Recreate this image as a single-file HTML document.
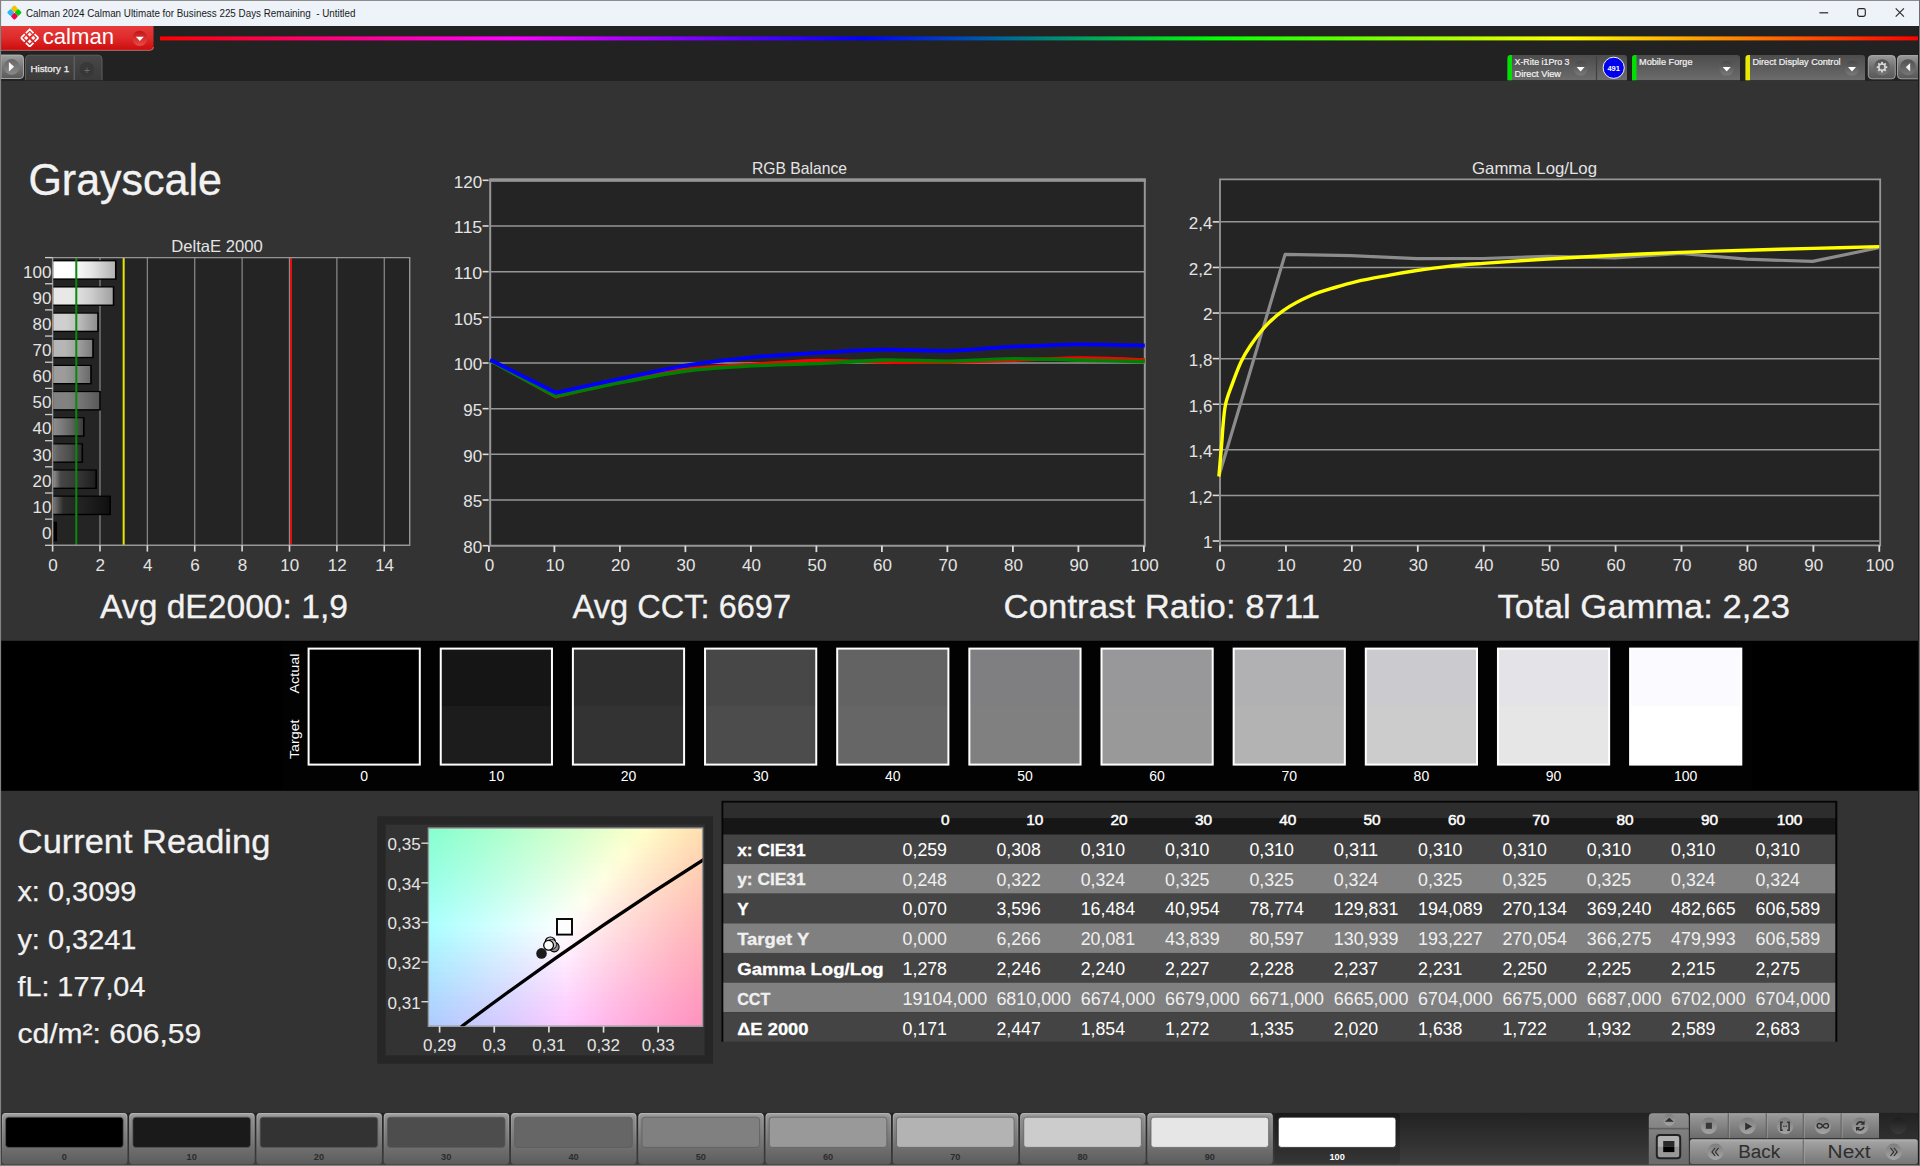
<!DOCTYPE html>
<html lang="en"><head><meta charset="utf-8"><title>Calman 2024 - Grayscale</title>
<style>html,body{margin:0;padding:0;background:#333;overflow:hidden}svg{display:block}text{font-family:"Liberation Sans",sans-serif;white-space:pre}</style></head>
<body>
<svg width="1920" height="1166" viewBox="0 0 1920 1166">
<defs>
<linearGradient id="gRed" x1="0" y1="0" x2="0" y2="1"><stop offset="0" stop-color="#e63c3c"/><stop offset="0.5" stop-color="#de2a2a"/><stop offset="1" stop-color="#cc0c0c"/></linearGradient>
<linearGradient id="gRedC" x1="0" y1="0" x2="0" y2="1"><stop offset="0" stop-color="#c21414"/><stop offset="1" stop-color="#e84a4a"/></linearGradient>
<linearGradient id="gRain" x1="0" y1="0" x2="1" y2="0"><stop offset="0" stop-color="#ff0000"/><stop offset="0.2" stop-color="#ff00ff"/><stop offset="0.4" stop-color="#0000ff"/><stop offset="0.6" stop-color="#00ff00"/><stop offset="0.8" stop-color="#ffff00"/><stop offset="1" stop-color="#ff0000"/></linearGradient>
<linearGradient id="gBtnL" x1="0" y1="0" x2="0" y2="1"><stop offset="0" stop-color="#a0a0a0"/><stop offset="0.5" stop-color="#777"/><stop offset="1" stop-color="#5a5a5a"/></linearGradient>
<linearGradient id="gPlayC" x1="0" y1="0" x2="0" y2="1"><stop offset="0" stop-color="#626262"/><stop offset="1" stop-color="#8e8e8e"/></linearGradient>
<linearGradient id="gTab" x1="0" y1="0" x2="0" y2="1"><stop offset="0" stop-color="#484848"/><stop offset="1" stop-color="#3a3a3a"/></linearGradient>
<linearGradient id="gDev" x1="0" y1="0" x2="0" y2="1"><stop offset="0" stop-color="#4c4c4c"/><stop offset="1" stop-color="#6c6c6c"/></linearGradient>
<linearGradient id="gDrop" x1="0" y1="0" x2="0" y2="1"><stop offset="0" stop-color="#474747"/><stop offset="1" stop-color="#7c7c7c"/></linearGradient>
<linearGradient id="gBtn" x1="0" y1="0" x2="0" y2="1"><stop offset="0" stop-color="#9a9a9a"/><stop offset="0.5" stop-color="#707070"/><stop offset="1" stop-color="#585858"/></linearGradient>
<linearGradient id="gB0" x1="0" y1="0" x2="1" y2="0"><stop offset="0" stop-color="#5f5f5f"/><stop offset="0.18" stop-color="#000000"/><stop offset="0.6" stop-color="#000000"/><stop offset="1" stop-color="#000000"/></linearGradient>
<linearGradient id="gB1" x1="0" y1="0" x2="1" y2="0"><stop offset="0" stop-color="#787878"/><stop offset="0.18" stop-color="#2c2c2c"/><stop offset="0.6" stop-color="#1f1f1f"/><stop offset="1" stop-color="#0f0f0f"/></linearGradient>
<linearGradient id="gB2" x1="0" y1="0" x2="1" y2="0"><stop offset="0" stop-color="#929292"/><stop offset="0.18" stop-color="#464646"/><stop offset="0.6" stop-color="#363636"/><stop offset="1" stop-color="#1e1e1e"/></linearGradient>
<linearGradient id="gB3" x1="0" y1="0" x2="1" y2="0"><stop offset="0" stop-color="#747474"/><stop offset="0.18" stop-color="#606060"/><stop offset="0.6" stop-color="#4d4d4d"/><stop offset="1" stop-color="#2c2c2c"/></linearGradient>
<linearGradient id="gB4" x1="0" y1="0" x2="1" y2="0"><stop offset="0" stop-color="#8e8e8e"/><stop offset="0.3" stop-color="#7a7a7a"/><stop offset="0.6" stop-color="#646464"/><stop offset="1" stop-color="#3b3b3b"/></linearGradient>
<linearGradient id="gB5" x1="0" y1="0" x2="1" y2="0"><stop offset="0" stop-color="#828282"/><stop offset="0.3" stop-color="#828282"/><stop offset="0.62" stop-color="#737373"/><stop offset="1" stop-color="#595959"/></linearGradient>
<linearGradient id="gB6" x1="0" y1="0" x2="1" y2="0"><stop offset="0" stop-color="#9c9c9c"/><stop offset="0.3" stop-color="#9c9c9c"/><stop offset="0.62" stop-color="#8a8a8a"/><stop offset="1" stop-color="#6b6b6b"/></linearGradient>
<linearGradient id="gB7" x1="0" y1="0" x2="1" y2="0"><stop offset="0" stop-color="#b6b6b6"/><stop offset="0.3" stop-color="#b6b6b6"/><stop offset="0.62" stop-color="#a1a1a1"/><stop offset="1" stop-color="#7d7d7d"/></linearGradient>
<linearGradient id="gB8" x1="0" y1="0" x2="1" y2="0"><stop offset="0" stop-color="#cfcfcf"/><stop offset="0.3" stop-color="#cfcfcf"/><stop offset="0.62" stop-color="#b8b8b8"/><stop offset="1" stop-color="#8f8f8f"/></linearGradient>
<linearGradient id="gB9" x1="0" y1="0" x2="1" y2="0"><stop offset="0" stop-color="#e8e8e8"/><stop offset="0.3" stop-color="#e8e8e8"/><stop offset="0.62" stop-color="#cfcfcf"/><stop offset="1" stop-color="#a1a1a1"/></linearGradient>
<linearGradient id="gB10" x1="0" y1="0" x2="1" y2="0"><stop offset="0" stop-color="#ffffff"/><stop offset="0.3" stop-color="#ffffff"/><stop offset="0.62" stop-color="#e5e5e5"/><stop offset="1" stop-color="#b2b2b2"/></linearGradient>
<linearGradient id="c0" x1="0" y1="0" x2="1" y2="0"><stop offset="0.0" stop-color="#87ffcf"/><stop offset="0.0714" stop-color="#91ffcf"/><stop offset="0.1429" stop-color="#9bffce"/><stop offset="0.2143" stop-color="#a5ffce"/><stop offset="0.2857" stop-color="#b0ffcd"/><stop offset="0.3571" stop-color="#bbffcd"/><stop offset="0.4286" stop-color="#c5ffcc"/><stop offset="0.5" stop-color="#d1ffcc"/><stop offset="0.5714" stop-color="#dcffcb"/><stop offset="0.6429" stop-color="#e7ffcb"/><stop offset="0.7143" stop-color="#f3ffca"/><stop offset="0.7857" stop-color="#ffffca"/><stop offset="0.8571" stop-color="#fff3c0"/><stop offset="0.9286" stop-color="#ffe8b7"/><stop offset="1.0" stop-color="#ffdeaf"/></linearGradient>
<linearGradient id="c1" x1="0" y1="0" x2="1" y2="0"><stop offset="0.0" stop-color="#89ffd1"/><stop offset="0.0714" stop-color="#93ffd1"/><stop offset="0.1429" stop-color="#9dffd0"/><stop offset="0.2143" stop-color="#a7ffd0"/><stop offset="0.2857" stop-color="#b2ffcf"/><stop offset="0.3571" stop-color="#bdffcf"/><stop offset="0.4286" stop-color="#c8ffcf"/><stop offset="0.5" stop-color="#d3ffce"/><stop offset="0.5714" stop-color="#deffce"/><stop offset="0.6429" stop-color="#eaffcd"/><stop offset="0.7143" stop-color="#f6ffcd"/><stop offset="0.7857" stop-color="#fffcca"/><stop offset="0.8571" stop-color="#fff1c0"/><stop offset="0.9286" stop-color="#ffe6b7"/><stop offset="1.0" stop-color="#ffdcaf"/></linearGradient>
<linearGradient id="c2" x1="0" y1="0" x2="1" y2="0"><stop offset="0.0" stop-color="#8affd3"/><stop offset="0.0714" stop-color="#95ffd3"/><stop offset="0.1429" stop-color="#9fffd3"/><stop offset="0.2143" stop-color="#a9ffd2"/><stop offset="0.2857" stop-color="#b4ffd2"/><stop offset="0.3571" stop-color="#bfffd1"/><stop offset="0.4286" stop-color="#caffd1"/><stop offset="0.5" stop-color="#d5ffd1"/><stop offset="0.5714" stop-color="#e0ffd0"/><stop offset="0.6429" stop-color="#ecffd0"/><stop offset="0.7143" stop-color="#f8ffcf"/><stop offset="0.7857" stop-color="#fffacb"/><stop offset="0.8571" stop-color="#ffeec1"/><stop offset="0.9286" stop-color="#ffe4b8"/><stop offset="1.0" stop-color="#ffdaaf"/></linearGradient>
<linearGradient id="c3" x1="0" y1="0" x2="1" y2="0"><stop offset="0.0" stop-color="#8cffd6"/><stop offset="0.0714" stop-color="#96ffd5"/><stop offset="0.1429" stop-color="#a1ffd5"/><stop offset="0.2143" stop-color="#abffd5"/><stop offset="0.2857" stop-color="#b6ffd4"/><stop offset="0.3571" stop-color="#c1ffd4"/><stop offset="0.4286" stop-color="#ccffd3"/><stop offset="0.5" stop-color="#d7ffd3"/><stop offset="0.5714" stop-color="#e3ffd3"/><stop offset="0.6429" stop-color="#efffd2"/><stop offset="0.7143" stop-color="#fbffd2"/><stop offset="0.7857" stop-color="#fff7cb"/><stop offset="0.8571" stop-color="#ffecc1"/><stop offset="0.9286" stop-color="#ffe2b8"/><stop offset="1.0" stop-color="#ffd8b0"/></linearGradient>
<linearGradient id="c4" x1="0" y1="0" x2="1" y2="0"><stop offset="0.0" stop-color="#8effd8"/><stop offset="0.0714" stop-color="#98ffd8"/><stop offset="0.1429" stop-color="#a2ffd7"/><stop offset="0.2143" stop-color="#adffd7"/><stop offset="0.2857" stop-color="#b8ffd7"/><stop offset="0.3571" stop-color="#c3ffd6"/><stop offset="0.4286" stop-color="#ceffd6"/><stop offset="0.5" stop-color="#d9ffd5"/><stop offset="0.5714" stop-color="#e5ffd5"/><stop offset="0.6429" stop-color="#f1ffd5"/><stop offset="0.7143" stop-color="#fdffd4"/><stop offset="0.7857" stop-color="#fff5cb"/><stop offset="0.8571" stop-color="#ffeac2"/><stop offset="0.9286" stop-color="#ffdfb9"/><stop offset="1.0" stop-color="#ffd6b0"/></linearGradient>
<linearGradient id="c5" x1="0" y1="0" x2="1" y2="0"><stop offset="0.0" stop-color="#90ffda"/><stop offset="0.0714" stop-color="#9affda"/><stop offset="0.1429" stop-color="#a4ffda"/><stop offset="0.2143" stop-color="#afffd9"/><stop offset="0.2857" stop-color="#baffd9"/><stop offset="0.3571" stop-color="#c5ffd9"/><stop offset="0.4286" stop-color="#d0ffd8"/><stop offset="0.5" stop-color="#dcffd8"/><stop offset="0.5714" stop-color="#e7ffd7"/><stop offset="0.6429" stop-color="#f4ffd7"/><stop offset="0.7143" stop-color="#fffed6"/><stop offset="0.7857" stop-color="#fff2cc"/><stop offset="0.8571" stop-color="#ffe7c2"/><stop offset="0.9286" stop-color="#ffddb9"/><stop offset="1.0" stop-color="#ffd4b1"/></linearGradient>
<linearGradient id="c6" x1="0" y1="0" x2="1" y2="0"><stop offset="0.0" stop-color="#91ffdd"/><stop offset="0.0714" stop-color="#9cffdc"/><stop offset="0.1429" stop-color="#a6ffdc"/><stop offset="0.2143" stop-color="#b1ffdc"/><stop offset="0.2857" stop-color="#bcffdb"/><stop offset="0.3571" stop-color="#c7ffdb"/><stop offset="0.4286" stop-color="#d2ffdb"/><stop offset="0.5" stop-color="#deffda"/><stop offset="0.5714" stop-color="#eaffda"/><stop offset="0.6429" stop-color="#f6ffda"/><stop offset="0.7143" stop-color="#fffcd6"/><stop offset="0.7857" stop-color="#fff0cc"/><stop offset="0.8571" stop-color="#ffe5c2"/><stop offset="0.9286" stop-color="#ffdbba"/><stop offset="1.0" stop-color="#ffd1b1"/></linearGradient>
<linearGradient id="c7" x1="0" y1="0" x2="1" y2="0"><stop offset="0.0" stop-color="#93ffdf"/><stop offset="0.0714" stop-color="#9dffdf"/><stop offset="0.1429" stop-color="#a8ffde"/><stop offset="0.2143" stop-color="#b3ffde"/><stop offset="0.2857" stop-color="#beffde"/><stop offset="0.3571" stop-color="#c9ffdd"/><stop offset="0.4286" stop-color="#d5ffdd"/><stop offset="0.5" stop-color="#e0ffdd"/><stop offset="0.5714" stop-color="#ecffdd"/><stop offset="0.6429" stop-color="#f9ffdc"/><stop offset="0.7143" stop-color="#fff9d7"/><stop offset="0.7857" stop-color="#ffedcc"/><stop offset="0.8571" stop-color="#ffe3c3"/><stop offset="0.9286" stop-color="#ffd9ba"/><stop offset="1.0" stop-color="#ffcfb2"/></linearGradient>
<linearGradient id="c8" x1="0" y1="0" x2="1" y2="0"><stop offset="0.0" stop-color="#95ffe1"/><stop offset="0.0714" stop-color="#9fffe1"/><stop offset="0.1429" stop-color="#aaffe1"/><stop offset="0.2143" stop-color="#b5ffe1"/><stop offset="0.2857" stop-color="#c0ffe0"/><stop offset="0.3571" stop-color="#cbffe0"/><stop offset="0.4286" stop-color="#d7ffe0"/><stop offset="0.5" stop-color="#e3ffdf"/><stop offset="0.5714" stop-color="#efffdf"/><stop offset="0.6429" stop-color="#fbffdf"/><stop offset="0.7143" stop-color="#fff7d7"/><stop offset="0.7857" stop-color="#ffebcd"/><stop offset="0.8571" stop-color="#ffe0c3"/><stop offset="0.9286" stop-color="#ffd6ba"/><stop offset="1.0" stop-color="#ffcdb2"/></linearGradient>
<linearGradient id="c9" x1="0" y1="0" x2="1" y2="0"><stop offset="0.0" stop-color="#97ffe4"/><stop offset="0.0714" stop-color="#a1ffe4"/><stop offset="0.1429" stop-color="#acffe3"/><stop offset="0.2143" stop-color="#b7ffe3"/><stop offset="0.2857" stop-color="#c2ffe3"/><stop offset="0.3571" stop-color="#ceffe3"/><stop offset="0.4286" stop-color="#d9ffe2"/><stop offset="0.5" stop-color="#e5ffe2"/><stop offset="0.5714" stop-color="#f1ffe2"/><stop offset="0.6429" stop-color="#feffe1"/><stop offset="0.7143" stop-color="#fff4d7"/><stop offset="0.7857" stop-color="#ffe9cd"/><stop offset="0.8571" stop-color="#ffdec4"/><stop offset="0.9286" stop-color="#ffd4bb"/><stop offset="1.0" stop-color="#ffcbb2"/></linearGradient>
<linearGradient id="c10" x1="0" y1="0" x2="1" y2="0"><stop offset="0.0" stop-color="#98ffe6"/><stop offset="0.0714" stop-color="#a3ffe6"/><stop offset="0.1429" stop-color="#aeffe6"/><stop offset="0.2143" stop-color="#b9ffe6"/><stop offset="0.2857" stop-color="#c4ffe5"/><stop offset="0.3571" stop-color="#d0ffe5"/><stop offset="0.4286" stop-color="#dcffe5"/><stop offset="0.5" stop-color="#e8ffe5"/><stop offset="0.5714" stop-color="#f4ffe4"/><stop offset="0.6429" stop-color="#fffee3"/><stop offset="0.7143" stop-color="#fff1d8"/><stop offset="0.7857" stop-color="#ffe6ce"/><stop offset="0.8571" stop-color="#ffdcc4"/><stop offset="0.9286" stop-color="#ffd2bb"/><stop offset="1.0" stop-color="#ffc9b3"/></linearGradient>
<linearGradient id="c11" x1="0" y1="0" x2="1" y2="0"><stop offset="0.0" stop-color="#9affe9"/><stop offset="0.0714" stop-color="#a5ffe9"/><stop offset="0.1429" stop-color="#b0ffe8"/><stop offset="0.2143" stop-color="#bbffe8"/><stop offset="0.2857" stop-color="#c6ffe8"/><stop offset="0.3571" stop-color="#d2ffe8"/><stop offset="0.4286" stop-color="#deffe8"/><stop offset="0.5" stop-color="#eaffe7"/><stop offset="0.5714" stop-color="#f7ffe7"/><stop offset="0.6429" stop-color="#fffbe3"/><stop offset="0.7143" stop-color="#ffefd8"/><stop offset="0.7857" stop-color="#ffe4ce"/><stop offset="0.8571" stop-color="#ffdac4"/><stop offset="0.9286" stop-color="#ffd0bc"/><stop offset="1.0" stop-color="#ffc7b3"/></linearGradient>
<linearGradient id="c12" x1="0" y1="0" x2="1" y2="0"><stop offset="0.0" stop-color="#9cffeb"/><stop offset="0.0714" stop-color="#a7ffeb"/><stop offset="0.1429" stop-color="#b2ffeb"/><stop offset="0.2143" stop-color="#bdffeb"/><stop offset="0.2857" stop-color="#c9ffeb"/><stop offset="0.3571" stop-color="#d4ffea"/><stop offset="0.4286" stop-color="#e0ffea"/><stop offset="0.5" stop-color="#edffea"/><stop offset="0.5714" stop-color="#f9ffea"/><stop offset="0.6429" stop-color="#fff8e3"/><stop offset="0.7143" stop-color="#ffecd8"/><stop offset="0.7857" stop-color="#ffe2ce"/><stop offset="0.8571" stop-color="#ffd7c5"/><stop offset="0.9286" stop-color="#ffcebc"/><stop offset="1.0" stop-color="#ffc5b4"/></linearGradient>
<linearGradient id="c13" x1="0" y1="0" x2="1" y2="0"><stop offset="0.0" stop-color="#9effee"/><stop offset="0.0714" stop-color="#a9ffee"/><stop offset="0.1429" stop-color="#b4ffee"/><stop offset="0.2143" stop-color="#bfffed"/><stop offset="0.2857" stop-color="#cbffed"/><stop offset="0.3571" stop-color="#d7ffed"/><stop offset="0.4286" stop-color="#e3ffed"/><stop offset="0.5" stop-color="#efffed"/><stop offset="0.5714" stop-color="#fcffed"/><stop offset="0.6429" stop-color="#fff6e4"/><stop offset="0.7143" stop-color="#ffead9"/><stop offset="0.7857" stop-color="#ffdfcf"/><stop offset="0.8571" stop-color="#ffd5c5"/><stop offset="0.9286" stop-color="#ffccbc"/><stop offset="1.0" stop-color="#ffc3b4"/></linearGradient>
<linearGradient id="c14" x1="0" y1="0" x2="1" y2="0"><stop offset="0.0" stop-color="#a0fff0"/><stop offset="0.0714" stop-color="#abfff0"/><stop offset="0.1429" stop-color="#b6fff0"/><stop offset="0.2143" stop-color="#c1fff0"/><stop offset="0.2857" stop-color="#cdfff0"/><stop offset="0.3571" stop-color="#d9fff0"/><stop offset="0.4286" stop-color="#e5fff0"/><stop offset="0.5" stop-color="#f2fff0"/><stop offset="0.5714" stop-color="#feffef"/><stop offset="0.6429" stop-color="#fff3e4"/><stop offset="0.7143" stop-color="#ffe8d9"/><stop offset="0.7857" stop-color="#ffddcf"/><stop offset="0.8571" stop-color="#ffd3c6"/><stop offset="0.9286" stop-color="#ffcabd"/><stop offset="1.0" stop-color="#ffc1b4"/></linearGradient>
<linearGradient id="c15" x1="0" y1="0" x2="1" y2="0"><stop offset="0.0" stop-color="#a2fff3"/><stop offset="0.0714" stop-color="#adfff3"/><stop offset="0.1429" stop-color="#b8fff3"/><stop offset="0.2143" stop-color="#c4fff3"/><stop offset="0.2857" stop-color="#cffff3"/><stop offset="0.3571" stop-color="#dcfff3"/><stop offset="0.4286" stop-color="#e8fff2"/><stop offset="0.5" stop-color="#f4fff2"/><stop offset="0.5714" stop-color="#fffdf0"/><stop offset="0.6429" stop-color="#fff1e4"/><stop offset="0.7143" stop-color="#ffe5d9"/><stop offset="0.7857" stop-color="#ffdbcf"/><stop offset="0.8571" stop-color="#ffd1c6"/><stop offset="0.9286" stop-color="#ffc8bd"/><stop offset="1.0" stop-color="#ffbfb5"/></linearGradient>
<linearGradient id="c16" x1="0" y1="0" x2="1" y2="0"><stop offset="0.0" stop-color="#a4fff6"/><stop offset="0.0714" stop-color="#affff6"/><stop offset="0.1429" stop-color="#bafff6"/><stop offset="0.2143" stop-color="#c6fff5"/><stop offset="0.2857" stop-color="#d2fff5"/><stop offset="0.3571" stop-color="#defff5"/><stop offset="0.4286" stop-color="#eafff5"/><stop offset="0.5" stop-color="#f7fff5"/><stop offset="0.5714" stop-color="#fffaf0"/><stop offset="0.6429" stop-color="#ffeee5"/><stop offset="0.7143" stop-color="#ffe3da"/><stop offset="0.7857" stop-color="#ffd8d0"/><stop offset="0.8571" stop-color="#ffcfc6"/><stop offset="0.9286" stop-color="#ffc5bd"/><stop offset="1.0" stop-color="#ffbdb5"/></linearGradient>
<linearGradient id="c17" x1="0" y1="0" x2="1" y2="0"><stop offset="0.0" stop-color="#a6fff8"/><stop offset="0.0714" stop-color="#b1fff8"/><stop offset="0.1429" stop-color="#bcfff8"/><stop offset="0.2143" stop-color="#c8fff8"/><stop offset="0.2857" stop-color="#d4fff8"/><stop offset="0.3571" stop-color="#e0fff8"/><stop offset="0.4286" stop-color="#edfff8"/><stop offset="0.5" stop-color="#fafff8"/><stop offset="0.5714" stop-color="#fff7f1"/><stop offset="0.6429" stop-color="#ffebe5"/><stop offset="0.7143" stop-color="#ffe0da"/><stop offset="0.7857" stop-color="#ffd6d0"/><stop offset="0.8571" stop-color="#ffccc7"/><stop offset="0.9286" stop-color="#ffc3be"/><stop offset="1.0" stop-color="#ffbbb6"/></linearGradient>
<linearGradient id="c18" x1="0" y1="0" x2="1" y2="0"><stop offset="0.0" stop-color="#a8fffb"/><stop offset="0.0714" stop-color="#b3fffb"/><stop offset="0.1429" stop-color="#bffffb"/><stop offset="0.2143" stop-color="#cafffb"/><stop offset="0.2857" stop-color="#d7fffb"/><stop offset="0.3571" stop-color="#e3fffb"/><stop offset="0.4286" stop-color="#f0fffb"/><stop offset="0.5" stop-color="#fcfffb"/><stop offset="0.5714" stop-color="#fff5f1"/><stop offset="0.6429" stop-color="#ffe9e5"/><stop offset="0.7143" stop-color="#ffdeda"/><stop offset="0.7857" stop-color="#ffd4d0"/><stop offset="0.8571" stop-color="#ffcac7"/><stop offset="0.9286" stop-color="#ffc1be"/><stop offset="1.0" stop-color="#ffb9b6"/></linearGradient>
<linearGradient id="c19" x1="0" y1="0" x2="1" y2="0"><stop offset="0.0" stop-color="#aafffe"/><stop offset="0.0714" stop-color="#b5fffe"/><stop offset="0.1429" stop-color="#c1fffe"/><stop offset="0.2143" stop-color="#cdfffe"/><stop offset="0.2857" stop-color="#d9fffe"/><stop offset="0.3571" stop-color="#e5fffe"/><stop offset="0.4286" stop-color="#f2fffe"/><stop offset="0.5" stop-color="#fffffe"/><stop offset="0.5714" stop-color="#fff2f1"/><stop offset="0.6429" stop-color="#ffe6e6"/><stop offset="0.7143" stop-color="#ffdcdb"/><stop offset="0.7857" stop-color="#ffd2d1"/><stop offset="0.8571" stop-color="#ffc8c7"/><stop offset="0.9286" stop-color="#ffbfbf"/><stop offset="1.0" stop-color="#ffb7b6"/></linearGradient>
<linearGradient id="c20" x1="0" y1="0" x2="1" y2="0"><stop offset="0.0" stop-color="#aafdff"/><stop offset="0.0714" stop-color="#b6fdff"/><stop offset="0.1429" stop-color="#c2fdff"/><stop offset="0.2143" stop-color="#cefdff"/><stop offset="0.2857" stop-color="#dafdff"/><stop offset="0.3571" stop-color="#e6fdff"/><stop offset="0.4286" stop-color="#f3fdff"/><stop offset="0.5" stop-color="#fffcfe"/><stop offset="0.5714" stop-color="#fff0f1"/><stop offset="0.6429" stop-color="#ffe4e6"/><stop offset="0.7143" stop-color="#ffd9db"/><stop offset="0.7857" stop-color="#ffcfd1"/><stop offset="0.8571" stop-color="#ffc6c8"/><stop offset="0.9286" stop-color="#ffbdbf"/><stop offset="1.0" stop-color="#ffb5b7"/></linearGradient>
<linearGradient id="c21" x1="0" y1="0" x2="1" y2="0"><stop offset="0.0" stop-color="#abfbff"/><stop offset="0.0714" stop-color="#b6fbff"/><stop offset="0.1429" stop-color="#c2faff"/><stop offset="0.2143" stop-color="#cefaff"/><stop offset="0.2857" stop-color="#dafaff"/><stop offset="0.3571" stop-color="#e6faff"/><stop offset="0.4286" stop-color="#f3faff"/><stop offset="0.5" stop-color="#fff9fe"/><stop offset="0.5714" stop-color="#ffedf2"/><stop offset="0.6429" stop-color="#ffe2e6"/><stop offset="0.7143" stop-color="#ffd7db"/><stop offset="0.7857" stop-color="#ffcdd1"/><stop offset="0.8571" stop-color="#ffc4c8"/><stop offset="0.9286" stop-color="#ffbbbf"/><stop offset="1.0" stop-color="#ffb3b7"/></linearGradient>
<linearGradient id="c22" x1="0" y1="0" x2="1" y2="0"><stop offset="0.0" stop-color="#abf8ff"/><stop offset="0.0714" stop-color="#b6f8ff"/><stop offset="0.1429" stop-color="#c2f8ff"/><stop offset="0.2143" stop-color="#cef8ff"/><stop offset="0.2857" stop-color="#daf7ff"/><stop offset="0.3571" stop-color="#e6f7ff"/><stop offset="0.4286" stop-color="#f3f7ff"/><stop offset="0.5" stop-color="#fff7fe"/><stop offset="0.5714" stop-color="#ffeaf2"/><stop offset="0.6429" stop-color="#ffdfe6"/><stop offset="0.7143" stop-color="#ffd5dc"/><stop offset="0.7857" stop-color="#ffcbd2"/><stop offset="0.8571" stop-color="#ffc2c8"/><stop offset="0.9286" stop-color="#ffb9c0"/><stop offset="1.0" stop-color="#ffb1b8"/></linearGradient>
<linearGradient id="c23" x1="0" y1="0" x2="1" y2="0"><stop offset="0.0" stop-color="#abf5ff"/><stop offset="0.0714" stop-color="#b6f5ff"/><stop offset="0.1429" stop-color="#c2f5ff"/><stop offset="0.2143" stop-color="#cef5ff"/><stop offset="0.2857" stop-color="#daf5ff"/><stop offset="0.3571" stop-color="#e6f5ff"/><stop offset="0.4286" stop-color="#f3f4ff"/><stop offset="0.5" stop-color="#fff4ff"/><stop offset="0.5714" stop-color="#ffe8f2"/><stop offset="0.6429" stop-color="#ffdde7"/><stop offset="0.7143" stop-color="#ffd2dc"/><stop offset="0.7857" stop-color="#ffc9d2"/><stop offset="0.8571" stop-color="#ffc0c9"/><stop offset="0.9286" stop-color="#ffb7c0"/><stop offset="1.0" stop-color="#ffafb8"/></linearGradient>
<linearGradient id="c24" x1="0" y1="0" x2="1" y2="0"><stop offset="0.0" stop-color="#abf2ff"/><stop offset="0.0714" stop-color="#b6f2ff"/><stop offset="0.1429" stop-color="#c2f2ff"/><stop offset="0.2143" stop-color="#cef2ff"/><stop offset="0.2857" stop-color="#daf2ff"/><stop offset="0.3571" stop-color="#e6f2ff"/><stop offset="0.4286" stop-color="#f2f2ff"/><stop offset="0.5" stop-color="#fff1ff"/><stop offset="0.5714" stop-color="#ffe5f2"/><stop offset="0.6429" stop-color="#ffdae7"/><stop offset="0.7143" stop-color="#ffd0dc"/><stop offset="0.7857" stop-color="#ffc7d2"/><stop offset="0.8571" stop-color="#ffbec9"/><stop offset="0.9286" stop-color="#ffb5c0"/><stop offset="1.0" stop-color="#ffaeb8"/></linearGradient>
<linearGradient id="c25" x1="0" y1="0" x2="1" y2="0"><stop offset="0.0" stop-color="#abf0ff"/><stop offset="0.0714" stop-color="#b7f0ff"/><stop offset="0.1429" stop-color="#c2efff"/><stop offset="0.2143" stop-color="#ceefff"/><stop offset="0.2857" stop-color="#daefff"/><stop offset="0.3571" stop-color="#e6efff"/><stop offset="0.4286" stop-color="#f2efff"/><stop offset="0.5" stop-color="#ffefff"/><stop offset="0.5714" stop-color="#ffe3f3"/><stop offset="0.6429" stop-color="#ffd8e7"/><stop offset="0.7143" stop-color="#ffcedd"/><stop offset="0.7857" stop-color="#ffc4d3"/><stop offset="0.8571" stop-color="#ffbcc9"/><stop offset="0.9286" stop-color="#ffb3c1"/><stop offset="1.0" stop-color="#ffacb9"/></linearGradient>
<linearGradient id="c26" x1="0" y1="0" x2="1" y2="0"><stop offset="0.0" stop-color="#acedff"/><stop offset="0.0714" stop-color="#b7edff"/><stop offset="0.1429" stop-color="#c2edff"/><stop offset="0.2143" stop-color="#ceedff"/><stop offset="0.2857" stop-color="#daecff"/><stop offset="0.3571" stop-color="#e6ecff"/><stop offset="0.4286" stop-color="#f2ecff"/><stop offset="0.5" stop-color="#ffecff"/><stop offset="0.5714" stop-color="#ffe0f3"/><stop offset="0.6429" stop-color="#ffd6e8"/><stop offset="0.7143" stop-color="#ffccdd"/><stop offset="0.7857" stop-color="#ffc2d3"/><stop offset="0.8571" stop-color="#ffbaca"/><stop offset="0.9286" stop-color="#ffb1c1"/><stop offset="1.0" stop-color="#ffaab9"/></linearGradient>
<linearGradient id="c27" x1="0" y1="0" x2="1" y2="0"><stop offset="0.0" stop-color="#acebff"/><stop offset="0.0714" stop-color="#b7eaff"/><stop offset="0.1429" stop-color="#c2eaff"/><stop offset="0.2143" stop-color="#ceeaff"/><stop offset="0.2857" stop-color="#daeaff"/><stop offset="0.3571" stop-color="#e6e9ff"/><stop offset="0.4286" stop-color="#f2e9ff"/><stop offset="0.5" stop-color="#ffe9ff"/><stop offset="0.5714" stop-color="#ffdef3"/><stop offset="0.6429" stop-color="#ffd3e8"/><stop offset="0.7143" stop-color="#ffc9dd"/><stop offset="0.7857" stop-color="#ffc0d3"/><stop offset="0.8571" stop-color="#ffb8ca"/><stop offset="0.9286" stop-color="#ffb0c2"/><stop offset="1.0" stop-color="#ffa8b9"/></linearGradient>
<linearGradient id="c28" x1="0" y1="0" x2="1" y2="0"><stop offset="0.0" stop-color="#ace8ff"/><stop offset="0.0714" stop-color="#b7e8ff"/><stop offset="0.1429" stop-color="#c2e7ff"/><stop offset="0.2143" stop-color="#cee7ff"/><stop offset="0.2857" stop-color="#dae7ff"/><stop offset="0.3571" stop-color="#e6e7ff"/><stop offset="0.4286" stop-color="#f2e6ff"/><stop offset="0.5" stop-color="#fee6ff"/><stop offset="0.5714" stop-color="#ffdbf3"/><stop offset="0.6429" stop-color="#ffd1e8"/><stop offset="0.7143" stop-color="#ffc7de"/><stop offset="0.7857" stop-color="#ffbed4"/><stop offset="0.8571" stop-color="#ffb6cb"/><stop offset="0.9286" stop-color="#ffaec2"/><stop offset="1.0" stop-color="#ffa6ba"/></linearGradient>
<linearGradient id="c29" x1="0" y1="0" x2="1" y2="0"><stop offset="0.0" stop-color="#ace5ff"/><stop offset="0.0714" stop-color="#b7e5ff"/><stop offset="0.1429" stop-color="#c2e5ff"/><stop offset="0.2143" stop-color="#cee5ff"/><stop offset="0.2857" stop-color="#dae4ff"/><stop offset="0.3571" stop-color="#e5e4ff"/><stop offset="0.4286" stop-color="#f2e4ff"/><stop offset="0.5" stop-color="#fee3ff"/><stop offset="0.5714" stop-color="#ffd9f4"/><stop offset="0.6429" stop-color="#ffcfe8"/><stop offset="0.7143" stop-color="#ffc5de"/><stop offset="0.7857" stop-color="#ffbcd4"/><stop offset="0.8571" stop-color="#ffb4cb"/><stop offset="0.9286" stop-color="#ffacc2"/><stop offset="1.0" stop-color="#ffa4ba"/></linearGradient>
<linearGradient id="c30" x1="0" y1="0" x2="1" y2="0"><stop offset="0.0" stop-color="#ace3ff"/><stop offset="0.0714" stop-color="#b7e3ff"/><stop offset="0.1429" stop-color="#c2e2ff"/><stop offset="0.2143" stop-color="#cee2ff"/><stop offset="0.2857" stop-color="#d9e2ff"/><stop offset="0.3571" stop-color="#e5e1ff"/><stop offset="0.4286" stop-color="#f2e1ff"/><stop offset="0.5" stop-color="#fee1ff"/><stop offset="0.5714" stop-color="#ffd7f4"/><stop offset="0.6429" stop-color="#ffcce9"/><stop offset="0.7143" stop-color="#ffc3de"/><stop offset="0.7857" stop-color="#ffbad4"/><stop offset="0.8571" stop-color="#ffb2cb"/><stop offset="0.9286" stop-color="#ffaac3"/><stop offset="1.0" stop-color="#ffa2bb"/></linearGradient>
<linearGradient id="c31" x1="0" y1="0" x2="1" y2="0"><stop offset="0.0" stop-color="#ace0ff"/><stop offset="0.0714" stop-color="#b7e0ff"/><stop offset="0.1429" stop-color="#c2e0ff"/><stop offset="0.2143" stop-color="#cedfff"/><stop offset="0.2857" stop-color="#d9dfff"/><stop offset="0.3571" stop-color="#e5dfff"/><stop offset="0.4286" stop-color="#f1deff"/><stop offset="0.5" stop-color="#fedeff"/><stop offset="0.5714" stop-color="#ffd4f4"/><stop offset="0.6429" stop-color="#ffcae9"/><stop offset="0.7143" stop-color="#ffc1de"/><stop offset="0.7857" stop-color="#ffb8d5"/><stop offset="0.8571" stop-color="#ffb0cc"/><stop offset="0.9286" stop-color="#ffa8c3"/><stop offset="1.0" stop-color="#ffa1bb"/></linearGradient>
<linearGradient id="c32" x1="0" y1="0" x2="1" y2="0"><stop offset="0.0" stop-color="#acdeff"/><stop offset="0.0714" stop-color="#b7ddff"/><stop offset="0.1429" stop-color="#c3ddff"/><stop offset="0.2143" stop-color="#ceddff"/><stop offset="0.2857" stop-color="#d9dcff"/><stop offset="0.3571" stop-color="#e5dcff"/><stop offset="0.4286" stop-color="#f1dcff"/><stop offset="0.5" stop-color="#fedbff"/><stop offset="0.5714" stop-color="#ffd2f4"/><stop offset="0.6429" stop-color="#ffc8e9"/><stop offset="0.7143" stop-color="#ffbedf"/><stop offset="0.7857" stop-color="#ffb6d5"/><stop offset="0.8571" stop-color="#ffaecc"/><stop offset="0.9286" stop-color="#ffa6c3"/><stop offset="1.0" stop-color="#ff9fbb"/></linearGradient>
<linearGradient id="c33" x1="0" y1="0" x2="1" y2="0"><stop offset="0.0" stop-color="#addbff"/><stop offset="0.0714" stop-color="#b8dbff"/><stop offset="0.1429" stop-color="#c3dbff"/><stop offset="0.2143" stop-color="#cedaff"/><stop offset="0.2857" stop-color="#d9daff"/><stop offset="0.3571" stop-color="#e5d9ff"/><stop offset="0.4286" stop-color="#f1d9ff"/><stop offset="0.5" stop-color="#fdd9ff"/><stop offset="0.5714" stop-color="#ffcff5"/><stop offset="0.6429" stop-color="#ffc5e9"/><stop offset="0.7143" stop-color="#ffbcdf"/><stop offset="0.7857" stop-color="#ffb4d5"/><stop offset="0.8571" stop-color="#ffaccc"/><stop offset="0.9286" stop-color="#ffa4c4"/><stop offset="1.0" stop-color="#ff9dbc"/></linearGradient>
<linearGradient id="c34" x1="0" y1="0" x2="1" y2="0"><stop offset="0.0" stop-color="#add9ff"/><stop offset="0.0714" stop-color="#b8d8ff"/><stop offset="0.1429" stop-color="#c3d8ff"/><stop offset="0.2143" stop-color="#ced8ff"/><stop offset="0.2857" stop-color="#d9d7ff"/><stop offset="0.3571" stop-color="#e5d7ff"/><stop offset="0.4286" stop-color="#f1d6ff"/><stop offset="0.5" stop-color="#fdd6ff"/><stop offset="0.5714" stop-color="#ffcdf5"/><stop offset="0.6429" stop-color="#ffc3ea"/><stop offset="0.7143" stop-color="#ffbadf"/><stop offset="0.7857" stop-color="#ffb2d6"/><stop offset="0.8571" stop-color="#ffaacd"/><stop offset="0.9286" stop-color="#ffa2c4"/><stop offset="1.0" stop-color="#ff9bbc"/></linearGradient>
<linearGradient id="c35" x1="0" y1="0" x2="1" y2="0"><stop offset="0.0" stop-color="#add6ff"/><stop offset="0.0714" stop-color="#b8d6ff"/><stop offset="0.1429" stop-color="#c3d6ff"/><stop offset="0.2143" stop-color="#ced5ff"/><stop offset="0.2857" stop-color="#d9d5ff"/><stop offset="0.3571" stop-color="#e5d4ff"/><stop offset="0.4286" stop-color="#f1d4ff"/><stop offset="0.5" stop-color="#fdd3ff"/><stop offset="0.5714" stop-color="#ffcbf5"/><stop offset="0.6429" stop-color="#ffc1ea"/><stop offset="0.7143" stop-color="#ffb8e0"/><stop offset="0.7857" stop-color="#ffb0d6"/><stop offset="0.8571" stop-color="#ffa8cd"/><stop offset="0.9286" stop-color="#ffa0c4"/><stop offset="1.0" stop-color="#ff9abc"/></linearGradient>
<linearGradient id="c36" x1="0" y1="0" x2="1" y2="0"><stop offset="0.0" stop-color="#add4ff"/><stop offset="0.0714" stop-color="#b8d4ff"/><stop offset="0.1429" stop-color="#c3d3ff"/><stop offset="0.2143" stop-color="#ced3ff"/><stop offset="0.2857" stop-color="#d9d2ff"/><stop offset="0.3571" stop-color="#e5d2ff"/><stop offset="0.4286" stop-color="#f1d1ff"/><stop offset="0.5" stop-color="#fdd1ff"/><stop offset="0.5714" stop-color="#ffc8f5"/><stop offset="0.6429" stop-color="#ffbfea"/><stop offset="0.7143" stop-color="#ffb6e0"/><stop offset="0.7857" stop-color="#ffaed6"/><stop offset="0.8571" stop-color="#ffa6cd"/><stop offset="0.9286" stop-color="#ff9fc5"/><stop offset="1.0" stop-color="#ff98bd"/></linearGradient>
<linearGradient id="c37" x1="0" y1="0" x2="1" y2="0"><stop offset="0.0" stop-color="#add2ff"/><stop offset="0.0714" stop-color="#b8d1ff"/><stop offset="0.1429" stop-color="#c3d1ff"/><stop offset="0.2143" stop-color="#ced0ff"/><stop offset="0.2857" stop-color="#d9d0ff"/><stop offset="0.3571" stop-color="#e5cfff"/><stop offset="0.4286" stop-color="#f1cfff"/><stop offset="0.5" stop-color="#fdceff"/><stop offset="0.5714" stop-color="#ffc6f6"/><stop offset="0.6429" stop-color="#ffbdea"/><stop offset="0.7143" stop-color="#ffb4e0"/><stop offset="0.7857" stop-color="#ffacd7"/><stop offset="0.8571" stop-color="#ffa4cd"/><stop offset="0.9286" stop-color="#ff9dc5"/><stop offset="1.0" stop-color="#ff96bd"/></linearGradient>
<linearGradient id="c38" x1="0" y1="0" x2="1" y2="0"><stop offset="0.0" stop-color="#adcfff"/><stop offset="0.0714" stop-color="#b8cfff"/><stop offset="0.1429" stop-color="#c3ceff"/><stop offset="0.2143" stop-color="#ceceff"/><stop offset="0.2857" stop-color="#d9cdff"/><stop offset="0.3571" stop-color="#e5cdff"/><stop offset="0.4286" stop-color="#f0ccff"/><stop offset="0.5" stop-color="#fcccff"/><stop offset="0.5714" stop-color="#ffc4f6"/><stop offset="0.6429" stop-color="#ffbaeb"/><stop offset="0.7143" stop-color="#ffb2e0"/><stop offset="0.7857" stop-color="#ffaad7"/><stop offset="0.8571" stop-color="#ffa2ce"/><stop offset="0.9286" stop-color="#ff9bc5"/><stop offset="1.0" stop-color="#ff94bd"/></linearGradient>
<linearGradient id="c39" x1="0" y1="0" x2="1" y2="0"><stop offset="0.0" stop-color="#aecdff"/><stop offset="0.0714" stop-color="#b8ccff"/><stop offset="0.1429" stop-color="#c3ccff"/><stop offset="0.2143" stop-color="#cecbff"/><stop offset="0.2857" stop-color="#d9cbff"/><stop offset="0.3571" stop-color="#e5caff"/><stop offset="0.4286" stop-color="#f0caff"/><stop offset="0.5" stop-color="#fcc9ff"/><stop offset="0.5714" stop-color="#ffc1f6"/><stop offset="0.6429" stop-color="#ffb8eb"/><stop offset="0.7143" stop-color="#ffb0e1"/><stop offset="0.7857" stop-color="#ffa8d7"/><stop offset="0.8571" stop-color="#ffa0ce"/><stop offset="0.9286" stop-color="#ff99c6"/><stop offset="1.0" stop-color="#ff93be"/></linearGradient>
<linearGradient id="gStrip" x1="0" y1="0" x2="0" y2="1"><stop offset="0" stop-color="#222222"/><stop offset="1" stop-color="#3e3e3e"/></linearGradient>
<linearGradient id="gPB" x1="0" y1="0" x2="0" y2="1"><stop offset="0" stop-color="#a6a6a6"/><stop offset="0.1" stop-color="#8e8e8e"/><stop offset="0.6" stop-color="#747474"/><stop offset="1" stop-color="#5c5c5c"/></linearGradient>
<linearGradient id="gPBs" x1="0" y1="0" x2="0" y2="1"><stop offset="0" stop-color="#1a1a1a"/><stop offset="1" stop-color="#363636"/></linearGradient>
<linearGradient id="gPBk" x1="0" y1="0" x2="0" y2="1"><stop offset="0" stop-color="#bcbcbc"/><stop offset="0.5" stop-color="#8a8a8a"/><stop offset="1" stop-color="#5a5a5a"/></linearGradient>
<linearGradient id="gC1" x1="0" y1="0" x2="0" y2="1"><stop offset="0" stop-color="#9a9a9a"/><stop offset="0.15" stop-color="#8e8e8e"/><stop offset="1" stop-color="#848484"/></linearGradient>
<linearGradient id="gC2" x1="0" y1="0" x2="0" y2="1"><stop offset="0" stop-color="#808080"/><stop offset="1" stop-color="#6a6a6a"/></linearGradient>
<linearGradient id="gC3" x1="0" y1="0" x2="0" y2="1"><stop offset="0" stop-color="#a4a4a4"/><stop offset="0.12" stop-color="#969696"/><stop offset="1" stop-color="#6c6c6c"/></linearGradient>
<linearGradient id="gCirc" x1="0" y1="0" x2="0" y2="1"><stop offset="0" stop-color="#787878"/><stop offset="1" stop-color="#adadad"/></linearGradient>
<linearGradient id="gDk" x1="0" y1="0" x2="0" y2="1"><stop offset="0" stop-color="#1e1e1e"/><stop offset="1" stop-color="#3a3a3a"/></linearGradient>
<linearGradient id="gBN" x1="0" y1="0" x2="0" y2="1"><stop offset="0" stop-color="#b4b4b4"/><stop offset="0.12" stop-color="#a0a0a0"/><stop offset="0.55" stop-color="#8c8c8c"/><stop offset="1" stop-color="#767676"/></linearGradient>
</defs>
<rect x="0" y="0" width="1920" height="1166" fill="#333333"/>
<rect x="0" y="0" width="1920" height="26" fill="#edf3f8"/>
<rect x="0" y="26" width="1920" height="55" fill="#222222"/>
<g transform="translate(14.4,12.5) rotate(45)"><rect x="-5.3" y="-5.3" width="5.3" height="5.3" rx="1.1" fill="#f6c000"/><rect x="0" y="-5.3" width="5.3" height="5.3" rx="1.1" fill="#04cf04"/><rect x="-5.3" y="0" width="5.3" height="5.3" rx="1.1" fill="#28b8f2"/><rect x="0" y="0" width="5.3" height="5.3" rx="1.1" fill="#f2024e"/></g>
<text x="26" y="17.2" font-size="11.6" fill="#1a1a1a" textLength="329.5" lengthAdjust="spacingAndGlyphs">Calman 2024 Calman Ultimate for Business 225 Days Remaining  - Untitled</text>
<line x1="1819.4" y1="12.8" x2="1828.2" y2="12.8" stroke="#262626" stroke-width="1.2"/>
<rect x="1857.7" y="8.6" width="7.6" height="7.7" rx="1.7" fill="none" stroke="#262626" stroke-width="1.15"/>
<path d="M1895.7 8.3 L1903.9 16.7 M1903.9 8.3 L1895.7 16.7" stroke="#262626" stroke-width="1.1" fill="none"/>
<path d="M1 26 H153.5 V47 Q153.5 50.3 150 50.3 H1 Z" fill="url(#gRed)"/>
<path d="M1 50.3 H150 Q153.5 50.3 153.5 47" fill="none" stroke="#d49090" stroke-width="0.9" opacity="0.8"/>
<g transform="translate(29.7,37.95) rotate(45)"><rect x="-6.15" y="-6.15" width="12.3" height="12.3" fill="none" stroke="#fff" stroke-width="1.75" stroke-dasharray="5.35 1.6 5.35 0" stroke-linecap="butt"/><rect x="-4" y="-4" width="3" height="3" fill="#fff"/><rect x="1" y="-4" width="3" height="3" fill="#fff"/><rect x="-4" y="1" width="3" height="3" fill="#fff"/><rect x="1" y="1" width="3" height="3" fill="#fff"/></g>
<text x="42.7" y="43.6" font-size="21.4" fill="#ffffff" textLength="71.3" lengthAdjust="spacingAndGlyphs">calman</text>
<circle cx="139.8" cy="38.3" r="7.6" fill="url(#gRedC)"/>
<path d="M135.8 36.7 H143.8 L139.8 41 Z" fill="#fff"/>
<rect x="160" y="36.4" width="1758" height="4" fill="url(#gRain)"/>
<path d="M1 55 H20 Q23.5 55 23.5 58.5 V75 Q23.5 78.5 20 78.5 H1 Z" fill="url(#gBtnL)" stroke="#bdbdbd" stroke-width="0.8"/>
<circle cx="11.6" cy="66.9" r="7.8" fill="url(#gPlayC)" opacity="0.9"/>
<path d="M8.9 62 L14.1 66.8 L8.9 71.5 Z" fill="#f6f6f6"/>
<path d="M25.5 80.2 V59 Q25.5 55.2 29.5 55.2 H98 Q102 55.2 102 59 V80.2 Z" fill="url(#gTab)"/>
<path d="M25.5 80.2 V59 Q25.5 55.2 29.5 55.2 H98 Q102 55.2 102 59 V80.2" fill="none" stroke="#5e5e5e" stroke-width="1"/>
<line x1="74.3" y1="56" x2="74.3" y2="80" stroke="#5e5e5e" stroke-width="1.4"/>
<text x="30.4" y="72" font-size="9.7" fill="#f0f0f0" textLength="38.8" lengthAdjust="spacingAndGlyphs" stroke="#f0f0f0" stroke-width="0.25">History 1</text>
<circle cx="86.9" cy="69.5" r="7.4" fill="#363636" opacity="0.8"/>
<text x="86.9" y="73.6" font-size="10" fill="#6c6c6c" text-anchor="middle">+</text>
<path d="M1507.5 80.2 V58 Q1507.5 55 1510.5 55 H1624 Q1627 55 1627 58 V80.2 Z" fill="url(#gDev)"/>
<path d="M1507.5 80.2 V58 Q1507.5 55 1510.5 55 H1512.0 V80.2 Z" fill="#00e000"/>
<text x="1514.5" y="65.2" font-size="9.6" fill="#f4f4f4" textLength="55" lengthAdjust="spacingAndGlyphs" stroke="#f4f4f4" stroke-width="0.2">X-Rite i1Pro 3</text>
<text x="1514.5" y="77" font-size="9.6" fill="#f4f4f4" textLength="46.5" lengthAdjust="spacingAndGlyphs" stroke="#f4f4f4" stroke-width="0.2">Direct View</text>
<circle cx="1580.6" cy="68.2" r="7.4" fill="url(#gDrop)" opacity="0.9"/>
<path d="M1576.6 67 H1584.6 L1580.6 71.4 Z" fill="#fff"/>
<line x1="1596.5" y1="56.5" x2="1596.5" y2="80" stroke="#404040" stroke-width="1.2"/>
<circle cx="1613.7" cy="67.8" r="10.6" fill="#0000f0" stroke="#f4f4f4" stroke-width="1"/>
<text x="1613.7" y="70.6" font-size="8" fill="#fff" text-anchor="middle" font-weight="bold" textLength="12.5" lengthAdjust="spacingAndGlyphs">491</text>
<path d="M1632 80.2 V58 Q1632 55 1635 55 H1737 Q1740 55 1740 58 V80.2 Z" fill="url(#gDev)"/>
<path d="M1632 80.2 V58 Q1632 55 1635 55 H1636.5 V80.2 Z" fill="#00e000"/>
<text x="1639" y="65.2" font-size="9.6" fill="#f4f4f4" textLength="53.5" lengthAdjust="spacingAndGlyphs" stroke="#f4f4f4" stroke-width="0.2">Mobile Forge</text>
<circle cx="1726.7" cy="68.2" r="7.4" fill="url(#gDrop)" opacity="0.9"/>
<path d="M1722.7 67 H1730.7 L1726.7 71.4 Z" fill="#fff"/>
<path d="M1745.5 80.2 V58 Q1745.5 55 1748.5 55 H1862 Q1865 55 1865 58 V80.2 Z" fill="url(#gDev)"/>
<path d="M1745.5 80.2 V58 Q1745.5 55 1748.5 55 H1750.0 V80.2 Z" fill="#e8e800"/>
<text x="1752.5" y="65.2" font-size="9.6" fill="#f4f4f4" textLength="88" lengthAdjust="spacingAndGlyphs" stroke="#f4f4f4" stroke-width="0.2">Direct Display Control</text>
<circle cx="1852" cy="68.2" r="7.4" fill="url(#gDrop)" opacity="0.9"/>
<path d="M1848 67 H1856 L1852 71.4 Z" fill="#fff"/>
<rect x="1868.3" y="55.5" width="27" height="23.3" rx="3.5" fill="url(#gBtn)" stroke="#b5b5b5" stroke-width="0.8"/>
<circle cx="1882" cy="67.2" r="8" fill="url(#gDrop)" opacity="0.85"/>
<g transform="translate(1882,67.2)"><rect x="-0.95" y="-5.3" width="1.9" height="2.4" transform="rotate(0)" fill="#d8d8d8"/><rect x="-0.95" y="-5.3" width="1.9" height="2.4" transform="rotate(45)" fill="#d8d8d8"/><rect x="-0.95" y="-5.3" width="1.9" height="2.4" transform="rotate(90)" fill="#d8d8d8"/><rect x="-0.95" y="-5.3" width="1.9" height="2.4" transform="rotate(135)" fill="#d8d8d8"/><rect x="-0.95" y="-5.3" width="1.9" height="2.4" transform="rotate(180)" fill="#d8d8d8"/><rect x="-0.95" y="-5.3" width="1.9" height="2.4" transform="rotate(225)" fill="#d8d8d8"/><rect x="-0.95" y="-5.3" width="1.9" height="2.4" transform="rotate(270)" fill="#d8d8d8"/><rect x="-0.95" y="-5.3" width="1.9" height="2.4" transform="rotate(315)" fill="#d8d8d8"/><circle r="3.1" fill="none" stroke="#d8d8d8" stroke-width="1.5"/></g>
<path d="M1919 55.5 H1901 Q1897.5 55.5 1897.5 59 V75.3 Q1897.5 78.8 1901 78.8 H1919 Z" fill="url(#gBtn)" stroke="#b5b5b5" stroke-width="0.8"/>
<circle cx="1908" cy="67.2" r="8" fill="url(#gDrop)" opacity="0.85"/>
<path d="M1910.2 63 L1905.8 67.2 L1910.2 71.4 Z" fill="#f2f2f2"/>
<text x="28.4" y="194.8" font-size="44.6" fill="#f2f2f2" textLength="193.5" lengthAdjust="spacingAndGlyphs" stroke="#f2f2f2" stroke-width="0.4">Grayscale</text>
<text x="217" y="251.9" font-size="16.5" fill="#e4e4e4" text-anchor="middle" textLength="91.5" lengthAdjust="spacingAndGlyphs">DeltaE 2000</text>
<rect x="52.6" y="257.6" width="357.09999999999997" height="287.69999999999993" fill="#242424"/>
<line x1="99.98" y1="257.6" x2="99.98" y2="545.3" stroke="#8c8c8c" stroke-width="1.2"/>
<line x1="147.36" y1="257.6" x2="147.36" y2="545.3" stroke="#8c8c8c" stroke-width="1.2"/>
<line x1="194.74" y1="257.6" x2="194.74" y2="545.3" stroke="#8c8c8c" stroke-width="1.2"/>
<line x1="242.12" y1="257.6" x2="242.12" y2="545.3" stroke="#8c8c8c" stroke-width="1.2"/>
<line x1="289.5" y1="257.6" x2="289.5" y2="545.3" stroke="#8c8c8c" stroke-width="1.2"/>
<line x1="336.88000000000005" y1="257.6" x2="336.88000000000005" y2="545.3" stroke="#8c8c8c" stroke-width="1.2"/>
<line x1="384.26000000000005" y1="257.6" x2="384.26000000000005" y2="545.3" stroke="#8c8c8c" stroke-width="1.2"/>
<rect x="53.0" y="521.72" width="4.05" height="19.6" fill="#000"/>
<rect x="53.2" y="522.92" width="2.25" height="17.0" fill="url(#gB0)"/>
<rect x="53.0" y="495.57" width="57.97" height="19.6" fill="#000"/>
<rect x="53.2" y="496.77" width="56.17" height="17.0" fill="url(#gB1)"/>
<rect x="53.0" y="469.41" width="43.92" height="19.6" fill="#000"/>
<rect x="53.2" y="470.61" width="42.12" height="17.0" fill="url(#gB2)"/>
<rect x="53.0" y="443.26" width="30.13" height="19.6" fill="#000"/>
<rect x="53.2" y="444.46" width="28.33" height="17.0" fill="url(#gB3)"/>
<rect x="53.0" y="417.1" width="31.63" height="19.6" fill="#000"/>
<rect x="53.2" y="418.3" width="29.83" height="17.0" fill="url(#gB4)"/>
<rect x="53.0" y="390.95" width="47.85" height="19.6" fill="#000"/>
<rect x="53.2" y="392.15" width="46.05" height="17.0" fill="url(#gB5)"/>
<rect x="53.0" y="364.8" width="38.8" height="19.6" fill="#000"/>
<rect x="53.2" y="366.0" width="37.0" height="17.0" fill="url(#gB6)"/>
<rect x="53.0" y="338.64" width="40.79" height="19.6" fill="#000"/>
<rect x="53.2" y="339.84" width="38.99" height="17.0" fill="url(#gB7)"/>
<rect x="53.0" y="312.49" width="45.77" height="19.6" fill="#000"/>
<rect x="53.2" y="313.69" width="43.97" height="17.0" fill="url(#gB8)"/>
<rect x="53.0" y="286.33" width="61.33" height="19.6" fill="#000"/>
<rect x="53.2" y="287.53" width="59.53" height="17.0" fill="url(#gB9)"/>
<rect x="53.0" y="260.18" width="63.56" height="19.6" fill="#000"/>
<rect x="53.2" y="261.38" width="61.76" height="17.0" fill="url(#gB10)"/>
<line x1="76.29" y1="257.6" x2="76.29" y2="545.3" stroke="#0a8a0a" stroke-width="2"/>
<line x1="123.67000000000002" y1="257.6" x2="123.67000000000002" y2="545.3" stroke="#e6e600" stroke-width="2"/>
<line x1="289.5" y1="257.6" x2="289.5" y2="545.3" stroke="#8c8c8c" stroke-width="1.2"/>
<line x1="291" y1="257.6" x2="291" y2="545.3" stroke="#e01010" stroke-width="2"/>
<path d="M52.6 257.6 H409.7 V545.3 H52.6 Z" fill="none" stroke="#969696" stroke-width="1.4"/>
<line x1="45" y1="257.6" x2="52.6" y2="257.6" stroke="#d0d0d0" stroke-width="1.3"/>
<line x1="45" y1="283.75454545454545" x2="52.6" y2="283.75454545454545" stroke="#d0d0d0" stroke-width="1.3"/>
<line x1="45" y1="309.90909090909093" x2="52.6" y2="309.90909090909093" stroke="#d0d0d0" stroke-width="1.3"/>
<line x1="45" y1="336.06363636363636" x2="52.6" y2="336.06363636363636" stroke="#d0d0d0" stroke-width="1.3"/>
<line x1="45" y1="362.21818181818185" x2="52.6" y2="362.21818181818185" stroke="#d0d0d0" stroke-width="1.3"/>
<line x1="45" y1="388.3727272727273" x2="52.6" y2="388.3727272727273" stroke="#d0d0d0" stroke-width="1.3"/>
<line x1="45" y1="414.5272727272727" x2="52.6" y2="414.5272727272727" stroke="#d0d0d0" stroke-width="1.3"/>
<line x1="45" y1="440.68181818181813" x2="52.6" y2="440.68181818181813" stroke="#d0d0d0" stroke-width="1.3"/>
<line x1="45" y1="466.8363636363636" x2="52.6" y2="466.8363636363636" stroke="#d0d0d0" stroke-width="1.3"/>
<line x1="45" y1="492.9909090909091" x2="52.6" y2="492.9909090909091" stroke="#d0d0d0" stroke-width="1.3"/>
<line x1="45" y1="519.1454545454545" x2="52.6" y2="519.1454545454545" stroke="#d0d0d0" stroke-width="1.3"/>
<line x1="45" y1="545.3" x2="52.6" y2="545.3" stroke="#d0d0d0" stroke-width="1.3"/>
<text x="51.5" y="539.0" font-size="15.9" fill="#e4e4e4" text-anchor="end" textLength="9.5" lengthAdjust="spacingAndGlyphs">0</text>
<text x="51.5" y="512.9" font-size="15.9" fill="#e4e4e4" text-anchor="end" textLength="18.9" lengthAdjust="spacingAndGlyphs">10</text>
<text x="51.5" y="486.7" font-size="15.9" fill="#e4e4e4" text-anchor="end" textLength="18.9" lengthAdjust="spacingAndGlyphs">20</text>
<text x="51.5" y="460.6" font-size="15.9" fill="#e4e4e4" text-anchor="end" textLength="18.9" lengthAdjust="spacingAndGlyphs">30</text>
<text x="51.5" y="434.4" font-size="15.9" fill="#e4e4e4" text-anchor="end" textLength="18.9" lengthAdjust="spacingAndGlyphs">40</text>
<text x="51.5" y="408.3" font-size="15.9" fill="#e4e4e4" text-anchor="end" textLength="18.9" lengthAdjust="spacingAndGlyphs">50</text>
<text x="51.5" y="382.1" font-size="15.9" fill="#e4e4e4" text-anchor="end" textLength="18.9" lengthAdjust="spacingAndGlyphs">60</text>
<text x="51.5" y="356.0" font-size="15.9" fill="#e4e4e4" text-anchor="end" textLength="18.9" lengthAdjust="spacingAndGlyphs">70</text>
<text x="51.5" y="329.8" font-size="15.9" fill="#e4e4e4" text-anchor="end" textLength="18.9" lengthAdjust="spacingAndGlyphs">80</text>
<text x="51.5" y="303.7" font-size="15.9" fill="#e4e4e4" text-anchor="end" textLength="18.9" lengthAdjust="spacingAndGlyphs">90</text>
<text x="51.5" y="277.5" font-size="15.9" fill="#e4e4e4" text-anchor="end" textLength="28.4" lengthAdjust="spacingAndGlyphs">100</text>
<line x1="52.6" y1="545.3" x2="52.6" y2="551.5999999999999" stroke="#d8d8d8" stroke-width="1.6"/>
<text x="52.9" y="570.8" font-size="15.9" fill="#e4e4e4" text-anchor="middle" textLength="9.5" lengthAdjust="spacingAndGlyphs">0</text>
<line x1="99.98" y1="545.3" x2="99.98" y2="551.5999999999999" stroke="#d8d8d8" stroke-width="1.6"/>
<text x="100.3" y="570.8" font-size="15.9" fill="#e4e4e4" text-anchor="middle" textLength="9.5" lengthAdjust="spacingAndGlyphs">2</text>
<line x1="147.36" y1="545.3" x2="147.36" y2="551.5999999999999" stroke="#d8d8d8" stroke-width="1.6"/>
<text x="147.7" y="570.8" font-size="15.9" fill="#e4e4e4" text-anchor="middle" textLength="9.5" lengthAdjust="spacingAndGlyphs">4</text>
<line x1="194.74" y1="545.3" x2="194.74" y2="551.5999999999999" stroke="#d8d8d8" stroke-width="1.6"/>
<text x="195.0" y="570.8" font-size="15.9" fill="#e4e4e4" text-anchor="middle" textLength="9.5" lengthAdjust="spacingAndGlyphs">6</text>
<line x1="242.12" y1="545.3" x2="242.12" y2="551.5999999999999" stroke="#d8d8d8" stroke-width="1.6"/>
<text x="242.4" y="570.8" font-size="15.9" fill="#e4e4e4" text-anchor="middle" textLength="9.5" lengthAdjust="spacingAndGlyphs">8</text>
<line x1="289.5" y1="545.3" x2="289.5" y2="551.5999999999999" stroke="#d8d8d8" stroke-width="1.6"/>
<text x="289.8" y="570.8" font-size="15.9" fill="#e4e4e4" text-anchor="middle" textLength="18.9" lengthAdjust="spacingAndGlyphs">10</text>
<line x1="336.88000000000005" y1="545.3" x2="336.88000000000005" y2="551.5999999999999" stroke="#d8d8d8" stroke-width="1.6"/>
<text x="337.2" y="570.8" font-size="15.9" fill="#e4e4e4" text-anchor="middle" textLength="18.9" lengthAdjust="spacingAndGlyphs">12</text>
<line x1="384.26000000000005" y1="545.3" x2="384.26000000000005" y2="551.5999999999999" stroke="#d8d8d8" stroke-width="1.6"/>
<text x="384.6" y="570.8" font-size="15.9" fill="#e4e4e4" text-anchor="middle" textLength="18.9" lengthAdjust="spacingAndGlyphs">14</text>
<text x="799.5" y="173.5" font-size="16.5" fill="#e4e4e4" text-anchor="middle" textLength="95" lengthAdjust="spacingAndGlyphs">RGB Balance</text>
<rect x="490.2" y="180.3" width="654.5999999999999" height="365.40000000000003" fill="#242424"/>
<line x1="482.6" y1="180.3" x2="488.6" y2="180.3" stroke="#dcdcdc" stroke-width="1.6"/>
<text x="482.2" y="187.7" font-size="15.9" fill="#e4e4e4" text-anchor="end" textLength="28.4" lengthAdjust="spacingAndGlyphs">120</text>
<line x1="490.2" y1="225.97500000000002" x2="1144.8" y2="225.97500000000002" stroke="#969696" stroke-width="1.5"/>
<line x1="482.6" y1="225.97500000000002" x2="488.6" y2="225.97500000000002" stroke="#dcdcdc" stroke-width="1.6"/>
<text x="482.2" y="233.4" font-size="15.9" fill="#e4e4e4" text-anchor="end" textLength="28.4" lengthAdjust="spacingAndGlyphs">115</text>
<line x1="490.2" y1="271.65000000000003" x2="1144.8" y2="271.65000000000003" stroke="#969696" stroke-width="1.5"/>
<line x1="482.6" y1="271.65000000000003" x2="488.6" y2="271.65000000000003" stroke="#dcdcdc" stroke-width="1.6"/>
<text x="482.2" y="279.1" font-size="15.9" fill="#e4e4e4" text-anchor="end" textLength="28.4" lengthAdjust="spacingAndGlyphs">110</text>
<line x1="490.2" y1="317.32500000000005" x2="1144.8" y2="317.32500000000005" stroke="#969696" stroke-width="1.5"/>
<line x1="482.6" y1="317.32500000000005" x2="488.6" y2="317.32500000000005" stroke="#dcdcdc" stroke-width="1.6"/>
<text x="482.2" y="324.7" font-size="15.9" fill="#e4e4e4" text-anchor="end" textLength="28.4" lengthAdjust="spacingAndGlyphs">105</text>
<line x1="490.2" y1="363.00000000000006" x2="1144.8" y2="363.00000000000006" stroke="#969696" stroke-width="1.5"/>
<line x1="482.6" y1="363.00000000000006" x2="488.6" y2="363.00000000000006" stroke="#dcdcdc" stroke-width="1.6"/>
<text x="482.2" y="370.4" font-size="15.9" fill="#e4e4e4" text-anchor="end" textLength="28.4" lengthAdjust="spacingAndGlyphs">100</text>
<line x1="490.2" y1="408.67500000000007" x2="1144.8" y2="408.67500000000007" stroke="#969696" stroke-width="1.5"/>
<line x1="482.6" y1="408.67500000000007" x2="488.6" y2="408.67500000000007" stroke="#dcdcdc" stroke-width="1.6"/>
<text x="482.2" y="416.1" font-size="15.9" fill="#e4e4e4" text-anchor="end" textLength="18.9" lengthAdjust="spacingAndGlyphs">95</text>
<line x1="490.2" y1="454.3500000000001" x2="1144.8" y2="454.3500000000001" stroke="#969696" stroke-width="1.5"/>
<line x1="482.6" y1="454.3500000000001" x2="488.6" y2="454.3500000000001" stroke="#dcdcdc" stroke-width="1.6"/>
<text x="482.2" y="461.8" font-size="15.9" fill="#e4e4e4" text-anchor="end" textLength="18.9" lengthAdjust="spacingAndGlyphs">90</text>
<line x1="490.2" y1="500.0250000000001" x2="1144.8" y2="500.0250000000001" stroke="#969696" stroke-width="1.5"/>
<line x1="482.6" y1="500.0250000000001" x2="488.6" y2="500.0250000000001" stroke="#dcdcdc" stroke-width="1.6"/>
<text x="482.2" y="507.4" font-size="15.9" fill="#e4e4e4" text-anchor="end" textLength="18.9" lengthAdjust="spacingAndGlyphs">85</text>
<line x1="482.6" y1="545.7" x2="488.6" y2="545.7" stroke="#dcdcdc" stroke-width="1.6"/>
<text x="482.2" y="553.1" font-size="15.9" fill="#e4e4e4" text-anchor="end" textLength="18.9" lengthAdjust="spacingAndGlyphs">80</text>
<path d="M490.2 180.3 H1144.8 V545.7 H490.2 Z" fill="none" stroke="#969696" stroke-width="2"/>
<line x1="489.2" y1="180.0" x2="1145.8" y2="180.0" stroke="#969696" stroke-width="3.7"/>
<line x1="488.9" y1="545.7" x2="488.9" y2="552.1" stroke="#dcdcdc" stroke-width="1.8"/>
<text x="489.5" y="570.8" font-size="15.9" fill="#e4e4e4" text-anchor="middle" textLength="9.5" lengthAdjust="spacingAndGlyphs">0</text>
<line x1="554.4" y1="545.7" x2="554.4" y2="552.1" stroke="#dcdcdc" stroke-width="1.8"/>
<text x="555.0" y="570.8" font-size="15.9" fill="#e4e4e4" text-anchor="middle" textLength="18.9" lengthAdjust="spacingAndGlyphs">10</text>
<line x1="619.9" y1="545.7" x2="619.9" y2="552.1" stroke="#dcdcdc" stroke-width="1.8"/>
<text x="620.5" y="570.8" font-size="15.9" fill="#e4e4e4" text-anchor="middle" textLength="18.9" lengthAdjust="spacingAndGlyphs">20</text>
<line x1="685.4" y1="545.7" x2="685.4" y2="552.1" stroke="#dcdcdc" stroke-width="1.8"/>
<text x="686.0" y="570.8" font-size="15.9" fill="#e4e4e4" text-anchor="middle" textLength="18.9" lengthAdjust="spacingAndGlyphs">30</text>
<line x1="750.9" y1="545.7" x2="750.9" y2="552.1" stroke="#dcdcdc" stroke-width="1.8"/>
<text x="751.5" y="570.8" font-size="15.9" fill="#e4e4e4" text-anchor="middle" textLength="18.9" lengthAdjust="spacingAndGlyphs">40</text>
<line x1="816.4" y1="545.7" x2="816.4" y2="552.1" stroke="#dcdcdc" stroke-width="1.8"/>
<text x="817.0" y="570.8" font-size="15.9" fill="#e4e4e4" text-anchor="middle" textLength="18.9" lengthAdjust="spacingAndGlyphs">50</text>
<line x1="881.9" y1="545.7" x2="881.9" y2="552.1" stroke="#dcdcdc" stroke-width="1.8"/>
<text x="882.5" y="570.8" font-size="15.9" fill="#e4e4e4" text-anchor="middle" textLength="18.9" lengthAdjust="spacingAndGlyphs">60</text>
<line x1="947.4" y1="545.7" x2="947.4" y2="552.1" stroke="#dcdcdc" stroke-width="1.8"/>
<text x="948.0" y="570.8" font-size="15.9" fill="#e4e4e4" text-anchor="middle" textLength="18.9" lengthAdjust="spacingAndGlyphs">70</text>
<line x1="1012.9" y1="545.7" x2="1012.9" y2="552.1" stroke="#dcdcdc" stroke-width="1.8"/>
<text x="1013.5" y="570.8" font-size="15.9" fill="#e4e4e4" text-anchor="middle" textLength="18.9" lengthAdjust="spacingAndGlyphs">80</text>
<line x1="1078.4" y1="545.7" x2="1078.4" y2="552.1" stroke="#dcdcdc" stroke-width="1.8"/>
<text x="1079.0" y="570.8" font-size="15.9" fill="#e4e4e4" text-anchor="middle" textLength="18.9" lengthAdjust="spacingAndGlyphs">90</text>
<line x1="1143.9" y1="545.7" x2="1143.9" y2="552.1" stroke="#dcdcdc" stroke-width="1.8"/>
<text x="1144.5" y="570.8" font-size="15.9" fill="#e4e4e4" text-anchor="middle" textLength="28.4" lengthAdjust="spacingAndGlyphs">100</text>
<path d="M490.2 360.3 C490.2 360.3 555.7 396.8 555.7 396.8 C555.7 396.8 605.4 384.6 621.1 381.3 C636.8 378.0 670.9 371.4 686.6 369.4 C702.3 367.4 736.3 365.4 752.0 364.4 C767.8 363.3 801.8 360.7 817.5 360.4 C833.2 360.2 867.2 361.9 883.0 362.1 C898.7 362.3 932.7 362.5 948.4 362.3 C964.1 362.0 998.2 360.8 1013.9 360.3 C1029.6 359.7 1063.6 358.0 1079.3 358.0 C1095.1 357.9 1136.9 359.5 1144.8 359.7" fill="none" stroke="#ff0000" stroke-width="3.4" stroke-linejoin="round"/>
<path d="M490.2 360.7 C490.2 360.7 555.7 396.3 555.7 396.3 C555.7 396.3 605.4 385.5 621.1 382.5 C636.8 379.4 670.9 372.9 686.6 370.9 C702.3 369.0 736.3 366.7 752.0 365.8 C767.8 364.9 801.8 364.1 817.5 363.5 C833.2 362.8 867.2 360.4 883.0 360.1 C898.7 359.8 932.7 361.3 948.4 361.2 C964.1 361.0 998.2 358.9 1013.9 358.8 C1029.6 358.7 1063.6 359.7 1079.3 360.1 C1095.1 360.4 1136.9 361.4 1144.8 361.6" fill="none" stroke="#008000" stroke-width="3.6" stroke-linejoin="round"/>
<path d="M490.2 359.8 C490.2 359.8 555.7 392.8 555.7 392.8 C555.7 392.8 605.4 382.0 621.1 378.7 C636.8 375.4 670.9 367.8 686.6 365.3 C702.3 362.7 736.3 358.8 752.0 357.3 C767.8 355.8 801.8 353.7 817.5 352.8 C833.2 351.8 867.2 349.8 883.0 349.6 C898.7 349.3 932.7 351.2 948.4 350.9 C964.1 350.5 998.2 347.5 1013.9 346.7 C1029.6 346.0 1063.6 344.4 1079.3 344.3 C1095.1 344.1 1136.9 345.3 1144.8 345.5" fill="none" stroke="#0000ff" stroke-width="3.8" stroke-linejoin="round"/>
<text x="1534.5" y="173.5" font-size="16.5" fill="#e4e4e4" text-anchor="middle" textLength="125" lengthAdjust="spacingAndGlyphs">Gamma Log/Log</text>
<rect x="1220" y="179.4" width="659.3" height="366.0" fill="#242424"/>
<line x1="1220" y1="541.0" x2="1879.3" y2="541.0" stroke="#969696" stroke-width="1.5"/>
<line x1="1212.7" y1="541.0" x2="1219" y2="541.0" stroke="#dcdcdc" stroke-width="1.6"/>
<text x="1212.4" y="548.4" font-size="15.9" fill="#e4e4e4" text-anchor="end" textLength="9.5" lengthAdjust="spacingAndGlyphs">1</text>
<line x1="1220" y1="495.40999999999997" x2="1879.3" y2="495.40999999999997" stroke="#969696" stroke-width="1.5"/>
<line x1="1212.7" y1="495.40999999999997" x2="1219" y2="495.40999999999997" stroke="#dcdcdc" stroke-width="1.6"/>
<text x="1212.4" y="502.8" font-size="15.9" fill="#e4e4e4" text-anchor="end" textLength="23.6" lengthAdjust="spacingAndGlyphs">1,2</text>
<line x1="1220" y1="449.82" x2="1879.3" y2="449.82" stroke="#969696" stroke-width="1.5"/>
<line x1="1212.7" y1="449.82" x2="1219" y2="449.82" stroke="#dcdcdc" stroke-width="1.6"/>
<text x="1212.4" y="457.2" font-size="15.9" fill="#e4e4e4" text-anchor="end" textLength="23.6" lengthAdjust="spacingAndGlyphs">1,4</text>
<line x1="1220" y1="404.23" x2="1879.3" y2="404.23" stroke="#969696" stroke-width="1.5"/>
<line x1="1212.7" y1="404.23" x2="1219" y2="404.23" stroke="#dcdcdc" stroke-width="1.6"/>
<text x="1212.4" y="411.6" font-size="15.9" fill="#e4e4e4" text-anchor="end" textLength="23.6" lengthAdjust="spacingAndGlyphs">1,6</text>
<line x1="1220" y1="358.64" x2="1879.3" y2="358.64" stroke="#969696" stroke-width="1.5"/>
<line x1="1212.7" y1="358.64" x2="1219" y2="358.64" stroke="#dcdcdc" stroke-width="1.6"/>
<text x="1212.4" y="366.0" font-size="15.9" fill="#e4e4e4" text-anchor="end" textLength="23.6" lengthAdjust="spacingAndGlyphs">1,8</text>
<line x1="1220" y1="313.04999999999995" x2="1879.3" y2="313.04999999999995" stroke="#969696" stroke-width="1.5"/>
<line x1="1212.7" y1="313.04999999999995" x2="1219" y2="313.04999999999995" stroke="#dcdcdc" stroke-width="1.6"/>
<text x="1212.4" y="320.4" font-size="15.9" fill="#e4e4e4" text-anchor="end" textLength="9.5" lengthAdjust="spacingAndGlyphs">2</text>
<line x1="1220" y1="267.46" x2="1879.3" y2="267.46" stroke="#969696" stroke-width="1.5"/>
<line x1="1212.7" y1="267.46" x2="1219" y2="267.46" stroke="#dcdcdc" stroke-width="1.6"/>
<text x="1212.4" y="274.9" font-size="15.9" fill="#e4e4e4" text-anchor="end" textLength="23.6" lengthAdjust="spacingAndGlyphs">2,2</text>
<line x1="1220" y1="221.87" x2="1879.3" y2="221.87" stroke="#969696" stroke-width="1.5"/>
<line x1="1212.7" y1="221.87" x2="1219" y2="221.87" stroke="#dcdcdc" stroke-width="1.6"/>
<text x="1212.4" y="229.3" font-size="15.9" fill="#e4e4e4" text-anchor="end" textLength="23.6" lengthAdjust="spacingAndGlyphs">2,4</text>
<path d="M1220 179.4 H1880.2 V545.4 H1220 Z" fill="none" stroke="#969696" stroke-width="1.8"/>
<line x1="1220.0" y1="545.4" x2="1220.0" y2="551.8" stroke="#dcdcdc" stroke-width="1.8"/>
<text x="1220.4" y="570.8" font-size="15.9" fill="#e4e4e4" text-anchor="middle" textLength="9.5" lengthAdjust="spacingAndGlyphs">0</text>
<line x1="1285.93" y1="545.4" x2="1285.93" y2="551.8" stroke="#dcdcdc" stroke-width="1.8"/>
<text x="1286.3" y="570.8" font-size="15.9" fill="#e4e4e4" text-anchor="middle" textLength="18.9" lengthAdjust="spacingAndGlyphs">10</text>
<line x1="1351.8600000000001" y1="545.4" x2="1351.8600000000001" y2="551.8" stroke="#dcdcdc" stroke-width="1.8"/>
<text x="1352.3" y="570.8" font-size="15.9" fill="#e4e4e4" text-anchor="middle" textLength="18.9" lengthAdjust="spacingAndGlyphs">20</text>
<line x1="1417.79" y1="545.4" x2="1417.79" y2="551.8" stroke="#dcdcdc" stroke-width="1.8"/>
<text x="1418.2" y="570.8" font-size="15.9" fill="#e4e4e4" text-anchor="middle" textLength="18.9" lengthAdjust="spacingAndGlyphs">30</text>
<line x1="1483.72" y1="545.4" x2="1483.72" y2="551.8" stroke="#dcdcdc" stroke-width="1.8"/>
<text x="1484.1" y="570.8" font-size="15.9" fill="#e4e4e4" text-anchor="middle" textLength="18.9" lengthAdjust="spacingAndGlyphs">40</text>
<line x1="1549.65" y1="545.4" x2="1549.65" y2="551.8" stroke="#dcdcdc" stroke-width="1.8"/>
<text x="1550.1" y="570.8" font-size="15.9" fill="#e4e4e4" text-anchor="middle" textLength="18.9" lengthAdjust="spacingAndGlyphs">50</text>
<line x1="1615.58" y1="545.4" x2="1615.58" y2="551.8" stroke="#dcdcdc" stroke-width="1.8"/>
<text x="1616.0" y="570.8" font-size="15.9" fill="#e4e4e4" text-anchor="middle" textLength="18.9" lengthAdjust="spacingAndGlyphs">60</text>
<line x1="1681.51" y1="545.4" x2="1681.51" y2="551.8" stroke="#dcdcdc" stroke-width="1.8"/>
<text x="1681.9" y="570.8" font-size="15.9" fill="#e4e4e4" text-anchor="middle" textLength="18.9" lengthAdjust="spacingAndGlyphs">70</text>
<line x1="1747.44" y1="545.4" x2="1747.44" y2="551.8" stroke="#dcdcdc" stroke-width="1.8"/>
<text x="1747.8" y="570.8" font-size="15.9" fill="#e4e4e4" text-anchor="middle" textLength="18.9" lengthAdjust="spacingAndGlyphs">80</text>
<line x1="1813.37" y1="545.4" x2="1813.37" y2="551.8" stroke="#dcdcdc" stroke-width="1.8"/>
<text x="1813.8" y="570.8" font-size="15.9" fill="#e4e4e4" text-anchor="middle" textLength="18.9" lengthAdjust="spacingAndGlyphs">90</text>
<line x1="1879.3" y1="545.4" x2="1879.3" y2="551.8" stroke="#dcdcdc" stroke-width="1.8"/>
<text x="1879.7" y="570.8" font-size="15.9" fill="#e4e4e4" text-anchor="middle" textLength="28.4" lengthAdjust="spacingAndGlyphs">100</text>
<polyline points="1219.2,475.0 1285.1,254.4 1351.1,255.7 1417.0,258.7 1482.9,258.5 1548.8,256.4 1614.8,257.8 1680.7,253.5 1746.6,259.2 1812.6,261.4 1878.5,247.8" fill="none" stroke="#8c8c8c" stroke-width="3.2" stroke-linejoin="round"/>
<path d="M1218.9 476.5 C1218.9 476.5 1222.0 440.0 1222.0 440.0 C1222.0 440.0 1223.6 415.2 1225.2 406.2 C1226.8 397.2 1229.7 391.0 1232.3 383.9 C1234.9 376.8 1238.3 367.7 1241.2 361.6 C1244.1 355.5 1246.3 351.7 1250.2 346.0 C1254.1 340.3 1260.5 331.6 1265.8 325.9 C1271.1 320.2 1276.5 315.1 1283.6 310.3 C1290.7 305.5 1302.2 299.4 1310.4 295.8 C1318.6 292.2 1327.4 289.8 1334.9 287.5 C1342.4 285.2 1348.6 283.3 1357.2 281.3 C1365.8 279.3 1379.2 277.0 1388.5 275.3 C1397.8 273.6 1405.4 272.3 1415.2 270.8 C1425.0 269.3 1439.2 267.3 1450.0 266.1 C1460.8 264.9 1467.4 264.5 1483.0 263.4 C1498.6 262.3 1526.1 260.3 1547.4 259.0 C1568.7 257.7 1594.7 256.3 1616.0 255.2 C1637.3 254.1 1659.4 253.2 1680.3 252.4 C1701.2 251.6 1725.5 250.8 1746.8 250.2 C1768.1 249.6 1792.0 249.0 1813.2 248.4 C1834.4 247.8 1868.7 246.9 1879.3 246.6" fill="none" stroke="#ffff00" stroke-width="3.4" stroke-linejoin="round"/>
<text x="100" y="617.8" font-size="33.5" fill="#f2f2f2" textLength="248" lengthAdjust="spacingAndGlyphs" stroke="#f2f2f2" stroke-width="0.3">Avg dE2000: 1,9</text>
<text x="572.6" y="617.8" font-size="33.5" fill="#f2f2f2" textLength="218.5" lengthAdjust="spacingAndGlyphs" stroke="#f2f2f2" stroke-width="0.3">Avg CCT: 6697</text>
<text x="1003.6" y="617.8" font-size="33.5" fill="#f2f2f2" textLength="316.5" lengthAdjust="spacingAndGlyphs" stroke="#f2f2f2" stroke-width="0.3">Contrast Ratio: 8711</text>
<text x="1497.5" y="617.8" font-size="33.5" fill="#f2f2f2" textLength="292.5" lengthAdjust="spacingAndGlyphs" stroke="#f2f2f2" stroke-width="0.3">Total Gamma: 2,23</text>
<rect x="1" y="640.8" width="1918" height="150" fill="#000000"/>
<rect x="283" y="641.5" width="1469" height="148.5" fill="#020202"/>
<rect x="308.6" y="648.6" width="111.2" height="116" fill="#000000"/>
<rect x="308.6" y="706" width="111.2" height="58.6" fill="#000000" shape-rendering="crispEdges"/>
<rect x="308.60" y="648.6" width="111.2" height="116" fill="none" stroke="#ffffff" stroke-width="2"/>
<text x="364.2" y="781.2" font-size="14" fill="#ffffff" text-anchor="middle">0</text>
<rect x="440.75" y="648.6" width="111.2" height="116" fill="#151515"/>
<rect x="440.75" y="706" width="111.2" height="58.6" fill="#1c1c1c" shape-rendering="crispEdges"/>
<rect x="440.75" y="648.6" width="111.2" height="116" fill="none" stroke="#ffffff" stroke-width="2"/>
<text x="496.4" y="781.2" font-size="14" fill="#ffffff" text-anchor="middle">10</text>
<rect x="572.9" y="648.6" width="111.2" height="116" fill="#2e2e2e"/>
<rect x="572.9" y="706" width="111.2" height="58.6" fill="#333333" shape-rendering="crispEdges"/>
<rect x="572.90" y="648.6" width="111.2" height="116" fill="none" stroke="#ffffff" stroke-width="2"/>
<text x="628.5" y="781.2" font-size="14" fill="#ffffff" text-anchor="middle">20</text>
<rect x="705.05" y="648.6" width="111.2" height="116" fill="#474748"/>
<rect x="705.05" y="706" width="111.2" height="58.6" fill="#4c4c4c" shape-rendering="crispEdges"/>
<rect x="705.05" y="648.6" width="111.2" height="116" fill="none" stroke="#ffffff" stroke-width="2"/>
<text x="760.7" y="781.2" font-size="14" fill="#ffffff" text-anchor="middle">30</text>
<rect x="837.2" y="648.6" width="111.2" height="116" fill="#636364"/>
<rect x="837.2" y="706" width="111.2" height="58.6" fill="#666666" shape-rendering="crispEdges"/>
<rect x="837.20" y="648.6" width="111.2" height="116" fill="none" stroke="#ffffff" stroke-width="2"/>
<text x="892.8" y="781.2" font-size="14" fill="#ffffff" text-anchor="middle">40</text>
<rect x="969.35" y="648.6" width="111.2" height="116" fill="#7f7f82"/>
<rect x="969.35" y="706" width="111.2" height="58.6" fill="#808080" shape-rendering="crispEdges"/>
<rect x="969.35" y="648.6" width="111.2" height="116" fill="none" stroke="#ffffff" stroke-width="2"/>
<text x="1025.0" y="781.2" font-size="14" fill="#ffffff" text-anchor="middle">50</text>
<rect x="1101.5" y="648.6" width="111.2" height="116" fill="#98989b"/>
<rect x="1101.5" y="706" width="111.2" height="58.6" fill="#999999" shape-rendering="crispEdges"/>
<rect x="1101.50" y="648.6" width="111.2" height="116" fill="none" stroke="#ffffff" stroke-width="2"/>
<text x="1157.1" y="781.2" font-size="14" fill="#ffffff" text-anchor="middle">60</text>
<rect x="1233.65" y="648.6" width="111.2" height="116" fill="#b1b1b4"/>
<rect x="1233.65" y="706" width="111.2" height="58.6" fill="#b3b3b3" shape-rendering="crispEdges"/>
<rect x="1233.65" y="648.6" width="111.2" height="116" fill="none" stroke="#ffffff" stroke-width="2"/>
<text x="1289.2" y="781.2" font-size="14" fill="#ffffff" text-anchor="middle">70</text>
<rect x="1365.8" y="648.6" width="111.2" height="116" fill="#cbcbcf"/>
<rect x="1365.8" y="706" width="111.2" height="58.6" fill="#cccccc" shape-rendering="crispEdges"/>
<rect x="1365.80" y="648.6" width="111.2" height="116" fill="none" stroke="#ffffff" stroke-width="2"/>
<text x="1421.4" y="781.2" font-size="14" fill="#ffffff" text-anchor="middle">80</text>
<rect x="1497.95" y="648.6" width="111.2" height="116" fill="#e4e4e8"/>
<rect x="1497.95" y="706" width="111.2" height="58.6" fill="#e6e6e6" shape-rendering="crispEdges"/>
<rect x="1497.95" y="648.6" width="111.2" height="116" fill="none" stroke="#ffffff" stroke-width="2"/>
<text x="1553.6" y="781.2" font-size="14" fill="#ffffff" text-anchor="middle">90</text>
<rect x="1630.1" y="648.6" width="111.2" height="116" fill="#fafaff"/>
<rect x="1630.1" y="706" width="111.2" height="58.6" fill="#ffffff" shape-rendering="crispEdges"/>
<rect x="1630.10" y="648.6" width="111.2" height="116" fill="none" stroke="#ffffff" stroke-width="2"/>
<text x="1685.7" y="781.2" font-size="14" fill="#ffffff" text-anchor="middle">100</text>
<text transform="translate(298.6,693.6) rotate(-90)" font-size="13.2" fill="#ffffff" textLength="40" lengthAdjust="spacingAndGlyphs">Actual</text>
<text transform="translate(298.6,759) rotate(-90)" font-size="13.2" fill="#ffffff" textLength="39.5" lengthAdjust="spacingAndGlyphs">Target</text>
<text x="17.8" y="852.6" font-size="33.5" fill="#f2f2f2" textLength="252.5" lengthAdjust="spacingAndGlyphs" stroke="#f2f2f2" stroke-width="0.3">Current Reading</text>
<text x="17.4" y="901.3" font-size="28" fill="#f2f2f2" textLength="119" lengthAdjust="spacingAndGlyphs" stroke="#f2f2f2" stroke-width="0.25">x: 0,3099</text>
<text x="17.4" y="948.6" font-size="28" fill="#f2f2f2" textLength="119" lengthAdjust="spacingAndGlyphs" stroke="#f2f2f2" stroke-width="0.25">y: 0,3241</text>
<text x="17.4" y="995.9" font-size="28" fill="#f2f2f2" textLength="128" lengthAdjust="spacingAndGlyphs" stroke="#f2f2f2" stroke-width="0.25">fL: 177,04</text>
<text x="17.4" y="1043.3" font-size="28" fill="#f2f2f2" textLength="183.8" lengthAdjust="spacingAndGlyphs" stroke="#f2f2f2" stroke-width="0.25">cd/m²: 606,59</text>
<rect x="377.2" y="816.3" width="335.8" height="247.4" fill="#262626"/>
<rect x="385.6" y="824.6" width="319" height="230.8" fill="#333333"/>
<g shape-rendering="crispEdges"><rect x="428.4" y="828.10" width="274.2" height="5.55" fill="url(#c0)"/><rect x="428.4" y="833.05" width="274.2" height="5.55" fill="url(#c1)"/><rect x="428.4" y="838.00" width="274.2" height="5.55" fill="url(#c2)"/><rect x="428.4" y="842.96" width="274.2" height="5.55" fill="url(#c3)"/><rect x="428.4" y="847.91" width="274.2" height="5.55" fill="url(#c4)"/><rect x="428.4" y="852.86" width="274.2" height="5.55" fill="url(#c5)"/><rect x="428.4" y="857.82" width="274.2" height="5.55" fill="url(#c6)"/><rect x="428.4" y="862.77" width="274.2" height="5.55" fill="url(#c7)"/><rect x="428.4" y="867.72" width="274.2" height="5.55" fill="url(#c8)"/><rect x="428.4" y="872.67" width="274.2" height="5.55" fill="url(#c9)"/><rect x="428.4" y="877.62" width="274.2" height="5.55" fill="url(#c10)"/><rect x="428.4" y="882.58" width="274.2" height="5.55" fill="url(#c11)"/><rect x="428.4" y="887.53" width="274.2" height="5.55" fill="url(#c12)"/><rect x="428.4" y="892.48" width="274.2" height="5.55" fill="url(#c13)"/><rect x="428.4" y="897.44" width="274.2" height="5.55" fill="url(#c14)"/><rect x="428.4" y="902.39" width="274.2" height="5.55" fill="url(#c15)"/><rect x="428.4" y="907.34" width="274.2" height="5.55" fill="url(#c16)"/><rect x="428.4" y="912.29" width="274.2" height="5.55" fill="url(#c17)"/><rect x="428.4" y="917.25" width="274.2" height="5.55" fill="url(#c18)"/><rect x="428.4" y="922.20" width="274.2" height="5.55" fill="url(#c19)"/><rect x="428.4" y="927.15" width="274.2" height="5.55" fill="url(#c20)"/><rect x="428.4" y="932.10" width="274.2" height="5.55" fill="url(#c21)"/><rect x="428.4" y="937.06" width="274.2" height="5.55" fill="url(#c22)"/><rect x="428.4" y="942.01" width="274.2" height="5.55" fill="url(#c23)"/><rect x="428.4" y="946.96" width="274.2" height="5.55" fill="url(#c24)"/><rect x="428.4" y="951.91" width="274.2" height="5.55" fill="url(#c25)"/><rect x="428.4" y="956.87" width="274.2" height="5.55" fill="url(#c26)"/><rect x="428.4" y="961.82" width="274.2" height="5.55" fill="url(#c27)"/><rect x="428.4" y="966.77" width="274.2" height="5.55" fill="url(#c28)"/><rect x="428.4" y="971.72" width="274.2" height="5.55" fill="url(#c29)"/><rect x="428.4" y="976.68" width="274.2" height="5.55" fill="url(#c30)"/><rect x="428.4" y="981.63" width="274.2" height="5.55" fill="url(#c31)"/><rect x="428.4" y="986.58" width="274.2" height="5.55" fill="url(#c32)"/><rect x="428.4" y="991.53" width="274.2" height="5.55" fill="url(#c33)"/><rect x="428.4" y="996.49" width="274.2" height="5.55" fill="url(#c34)"/><rect x="428.4" y="1001.44" width="274.2" height="5.55" fill="url(#c35)"/><rect x="428.4" y="1006.39" width="274.2" height="5.55" fill="url(#c36)"/><rect x="428.4" y="1011.34" width="274.2" height="5.55" fill="url(#c37)"/><rect x="428.4" y="1016.30" width="274.2" height="5.55" fill="url(#c38)"/><rect x="428.4" y="1021.25" width="274.2" height="5.55" fill="url(#c39)"/></g>
<rect x="428.4" y="828.1" width="274.2" height="198.1" fill="none" stroke="#9a9a9a" stroke-width="1.4"/>
<clipPath id="cieclip"><rect x="428.4" y="828.1" width="274.2" height="198.1"/></clipPath>
<path d="M461.2 1026.8 Q579.2 938 703.9 859.4" fill="none" stroke="#000" stroke-width="3.3" clip-path="url(#cieclip)"/>
<rect x="557" y="919" width="15" height="15.6" fill="#fdfdfd" stroke="#000" stroke-width="1.9"/>
<circle cx="550.3" cy="942.1" r="5.1" fill="#d2d2d2" stroke="#000" stroke-width="1.1"/>
<circle cx="554.2" cy="947" r="4.9" fill="#8c8c8c" stroke="#000" stroke-width="1.1"/>
<circle cx="551.6" cy="944.4" r="4.9" fill="#c8c8c8" stroke="#000" stroke-width="0.9"/>
<circle cx="548.6" cy="945.3" r="4.9" fill="#fcfcfc" stroke="#000" stroke-width="1.3"/>
<circle cx="541.5" cy="953.4" r="5.3" fill="#1c1c1c"/>
<line x1="421.4" y1="843.2" x2="428.4" y2="843.2" stroke="#d8d8d8" stroke-width="1.4"/>
<text x="420.6" y="850.1" font-size="15.9" fill="#e4e4e4" text-anchor="end" textLength="33.1" lengthAdjust="spacingAndGlyphs">0,35</text>
<line x1="421.4" y1="882.83" x2="428.4" y2="882.83" stroke="#d8d8d8" stroke-width="1.4"/>
<text x="420.6" y="889.7" font-size="15.9" fill="#e4e4e4" text-anchor="end" textLength="33.1" lengthAdjust="spacingAndGlyphs">0,34</text>
<line x1="421.4" y1="922.46" x2="428.4" y2="922.46" stroke="#d8d8d8" stroke-width="1.4"/>
<text x="420.6" y="929.4" font-size="15.9" fill="#e4e4e4" text-anchor="end" textLength="33.1" lengthAdjust="spacingAndGlyphs">0,33</text>
<line x1="421.4" y1="962.09" x2="428.4" y2="962.09" stroke="#d8d8d8" stroke-width="1.4"/>
<text x="420.6" y="969.0" font-size="15.9" fill="#e4e4e4" text-anchor="end" textLength="33.1" lengthAdjust="spacingAndGlyphs">0,32</text>
<line x1="421.4" y1="1001.72" x2="428.4" y2="1001.72" stroke="#d8d8d8" stroke-width="1.4"/>
<text x="420.6" y="1008.6" font-size="15.9" fill="#e4e4e4" text-anchor="end" textLength="33.1" lengthAdjust="spacingAndGlyphs">0,31</text>
<line x1="439.6" y1="1026.2" x2="439.6" y2="1032.6000000000001" stroke="#dcdcdc" stroke-width="1.7"/>
<text x="439.6" y="1050.6" font-size="15.9" fill="#e4e4e4" text-anchor="middle" textLength="33.1" lengthAdjust="spacingAndGlyphs">0,29</text>
<line x1="494.25" y1="1026.2" x2="494.25" y2="1032.6000000000001" stroke="#dcdcdc" stroke-width="1.7"/>
<text x="494.2" y="1050.6" font-size="15.9" fill="#e4e4e4" text-anchor="middle" textLength="23.6" lengthAdjust="spacingAndGlyphs">0,3</text>
<line x1="548.9" y1="1026.2" x2="548.9" y2="1032.6000000000001" stroke="#dcdcdc" stroke-width="1.7"/>
<text x="548.9" y="1050.6" font-size="15.9" fill="#e4e4e4" text-anchor="middle" textLength="33.1" lengthAdjust="spacingAndGlyphs">0,31</text>
<line x1="603.55" y1="1026.2" x2="603.55" y2="1032.6000000000001" stroke="#dcdcdc" stroke-width="1.7"/>
<text x="603.5" y="1050.6" font-size="15.9" fill="#e4e4e4" text-anchor="middle" textLength="33.1" lengthAdjust="spacingAndGlyphs">0,32</text>
<line x1="658.2" y1="1026.2" x2="658.2" y2="1032.6000000000001" stroke="#dcdcdc" stroke-width="1.7"/>
<text x="658.2" y="1050.6" font-size="15.9" fill="#e4e4e4" text-anchor="middle" textLength="33.1" lengthAdjust="spacingAndGlyphs">0,33</text>
<rect x="721.5" y="800.8" width="1115.8" height="241" fill="#050505"/>
<rect x="723.3" y="802.6" width="1112.0" height="16" fill="#2d2d2d"/>
<rect x="723.3" y="818.6" width="1112.0" height="15.8" fill="#161616"/>
<text x="949.6" y="824.6" font-size="15.4" fill="#ffffff" text-anchor="end" stroke="#ffffff" stroke-width="0.5">0</text>
<text x="1043.3" y="824.6" font-size="15.4" fill="#ffffff" text-anchor="end" stroke="#ffffff" stroke-width="0.5">10</text>
<text x="1127.6" y="824.6" font-size="15.4" fill="#ffffff" text-anchor="end" stroke="#ffffff" stroke-width="0.5">20</text>
<text x="1212.0" y="824.6" font-size="15.4" fill="#ffffff" text-anchor="end" stroke="#ffffff" stroke-width="0.5">30</text>
<text x="1296.3" y="824.6" font-size="15.4" fill="#ffffff" text-anchor="end" stroke="#ffffff" stroke-width="0.5">40</text>
<text x="1380.7" y="824.6" font-size="15.4" fill="#ffffff" text-anchor="end" stroke="#ffffff" stroke-width="0.5">50</text>
<text x="1465.0" y="824.6" font-size="15.4" fill="#ffffff" text-anchor="end" stroke="#ffffff" stroke-width="0.5">60</text>
<text x="1549.3" y="824.6" font-size="15.4" fill="#ffffff" text-anchor="end" stroke="#ffffff" stroke-width="0.5">70</text>
<text x="1633.7" y="824.6" font-size="15.4" fill="#ffffff" text-anchor="end" stroke="#ffffff" stroke-width="0.5">80</text>
<text x="1718.0" y="824.6" font-size="15.4" fill="#ffffff" text-anchor="end" stroke="#ffffff" stroke-width="0.5">90</text>
<text x="1802.4" y="824.6" font-size="15.4" fill="#ffffff" text-anchor="end" stroke="#ffffff" stroke-width="0.5">100</text>
<rect x="723.3" y="834.4" width="1112.0" height="29.700000000000003" fill="#444444"/>
<text x="737.2" y="855.6" font-size="17.1" fill="#ffffff" font-weight="bold" textLength="68.5" lengthAdjust="spacingAndGlyphs" stroke="#ffffff" stroke-width="0.3">x: CIE31</text>
<text x="902.6" y="855.7" font-size="18.4" fill="#ffffff" textLength="44.4" lengthAdjust="spacingAndGlyphs">0,259</text>
<text x="996.4" y="855.7" font-size="18.4" fill="#ffffff" textLength="44.4" lengthAdjust="spacingAndGlyphs">0,308</text>
<text x="1080.7" y="855.7" font-size="18.4" fill="#ffffff" textLength="44.4" lengthAdjust="spacingAndGlyphs">0,310</text>
<text x="1165.1" y="855.7" font-size="18.4" fill="#ffffff" textLength="44.4" lengthAdjust="spacingAndGlyphs">0,310</text>
<text x="1249.4" y="855.7" font-size="18.4" fill="#ffffff" textLength="44.4" lengthAdjust="spacingAndGlyphs">0,310</text>
<text x="1333.8" y="855.7" font-size="18.4" fill="#ffffff" textLength="44.4" lengthAdjust="spacingAndGlyphs">0,311</text>
<text x="1418.1" y="855.7" font-size="18.4" fill="#ffffff" textLength="44.4" lengthAdjust="spacingAndGlyphs">0,310</text>
<text x="1502.4" y="855.7" font-size="18.4" fill="#ffffff" textLength="44.4" lengthAdjust="spacingAndGlyphs">0,310</text>
<text x="1586.8" y="855.7" font-size="18.4" fill="#ffffff" textLength="44.4" lengthAdjust="spacingAndGlyphs">0,310</text>
<text x="1671.1" y="855.7" font-size="18.4" fill="#ffffff" textLength="44.4" lengthAdjust="spacingAndGlyphs">0,310</text>
<text x="1755.5" y="855.7" font-size="18.4" fill="#ffffff" textLength="44.4" lengthAdjust="spacingAndGlyphs">0,310</text>
<rect x="723.3" y="864.03" width="1112.0" height="29.700000000000003" fill="#808080"/>
<text x="737.2" y="885.4" font-size="17.1" fill="#f0f0f0" font-weight="bold" textLength="68.5" lengthAdjust="spacingAndGlyphs" stroke="#f0f0f0" stroke-width="0.3">y: CIE31</text>
<text x="902.6" y="885.5" font-size="18.4" fill="#f0f0f0" textLength="44.4" lengthAdjust="spacingAndGlyphs">0,248</text>
<text x="996.4" y="885.5" font-size="18.4" fill="#f0f0f0" textLength="44.4" lengthAdjust="spacingAndGlyphs">0,322</text>
<text x="1080.7" y="885.5" font-size="18.4" fill="#f0f0f0" textLength="44.4" lengthAdjust="spacingAndGlyphs">0,324</text>
<text x="1165.1" y="885.5" font-size="18.4" fill="#f0f0f0" textLength="44.4" lengthAdjust="spacingAndGlyphs">0,325</text>
<text x="1249.4" y="885.5" font-size="18.4" fill="#f0f0f0" textLength="44.4" lengthAdjust="spacingAndGlyphs">0,325</text>
<text x="1333.8" y="885.5" font-size="18.4" fill="#f0f0f0" textLength="44.4" lengthAdjust="spacingAndGlyphs">0,324</text>
<text x="1418.1" y="885.5" font-size="18.4" fill="#f0f0f0" textLength="44.4" lengthAdjust="spacingAndGlyphs">0,325</text>
<text x="1502.4" y="885.5" font-size="18.4" fill="#f0f0f0" textLength="44.4" lengthAdjust="spacingAndGlyphs">0,325</text>
<text x="1586.8" y="885.5" font-size="18.4" fill="#f0f0f0" textLength="44.4" lengthAdjust="spacingAndGlyphs">0,325</text>
<text x="1671.1" y="885.5" font-size="18.4" fill="#f0f0f0" textLength="44.4" lengthAdjust="spacingAndGlyphs">0,324</text>
<text x="1755.5" y="885.5" font-size="18.4" fill="#f0f0f0" textLength="44.4" lengthAdjust="spacingAndGlyphs">0,324</text>
<rect x="723.3" y="893.66" width="1112.0" height="29.700000000000003" fill="#444444"/>
<text x="737.2" y="915.3" font-size="17.1" fill="#ffffff" font-weight="bold" textLength="11.4" lengthAdjust="spacingAndGlyphs" stroke="#ffffff" stroke-width="0.3">Y</text>
<text x="902.6" y="915.4" font-size="18.4" fill="#ffffff" textLength="44.4" lengthAdjust="spacingAndGlyphs">0,070</text>
<text x="996.4" y="915.4" font-size="18.4" fill="#ffffff" textLength="44.4" lengthAdjust="spacingAndGlyphs">3,596</text>
<text x="1080.7" y="915.4" font-size="18.4" fill="#ffffff" textLength="54.5" lengthAdjust="spacingAndGlyphs">16,484</text>
<text x="1165.1" y="915.4" font-size="18.4" fill="#ffffff" textLength="54.5" lengthAdjust="spacingAndGlyphs">40,954</text>
<text x="1249.4" y="915.4" font-size="18.4" fill="#ffffff" textLength="54.5" lengthAdjust="spacingAndGlyphs">78,774</text>
<text x="1333.8" y="915.4" font-size="18.4" fill="#ffffff" textLength="64.6" lengthAdjust="spacingAndGlyphs">129,831</text>
<text x="1418.1" y="915.4" font-size="18.4" fill="#ffffff" textLength="64.6" lengthAdjust="spacingAndGlyphs">194,089</text>
<text x="1502.4" y="915.4" font-size="18.4" fill="#ffffff" textLength="64.6" lengthAdjust="spacingAndGlyphs">270,134</text>
<text x="1586.8" y="915.4" font-size="18.4" fill="#ffffff" textLength="64.6" lengthAdjust="spacingAndGlyphs">369,240</text>
<text x="1671.1" y="915.4" font-size="18.4" fill="#ffffff" textLength="64.6" lengthAdjust="spacingAndGlyphs">482,665</text>
<text x="1755.5" y="915.4" font-size="18.4" fill="#ffffff" textLength="64.6" lengthAdjust="spacingAndGlyphs">606,589</text>
<rect x="723.3" y="923.29" width="1112.0" height="29.700000000000003" fill="#808080"/>
<text x="737.2" y="945.1" font-size="17.1" fill="#f0f0f0" font-weight="bold" textLength="72" lengthAdjust="spacingAndGlyphs" stroke="#f0f0f0" stroke-width="0.3">Target Y</text>
<text x="902.6" y="945.2" font-size="18.4" fill="#f0f0f0" textLength="44.4" lengthAdjust="spacingAndGlyphs">0,000</text>
<text x="996.4" y="945.2" font-size="18.4" fill="#f0f0f0" textLength="44.4" lengthAdjust="spacingAndGlyphs">6,266</text>
<text x="1080.7" y="945.2" font-size="18.4" fill="#f0f0f0" textLength="54.5" lengthAdjust="spacingAndGlyphs">20,081</text>
<text x="1165.1" y="945.2" font-size="18.4" fill="#f0f0f0" textLength="54.5" lengthAdjust="spacingAndGlyphs">43,839</text>
<text x="1249.4" y="945.2" font-size="18.4" fill="#f0f0f0" textLength="54.5" lengthAdjust="spacingAndGlyphs">80,597</text>
<text x="1333.8" y="945.2" font-size="18.4" fill="#f0f0f0" textLength="64.6" lengthAdjust="spacingAndGlyphs">130,939</text>
<text x="1418.1" y="945.2" font-size="18.4" fill="#f0f0f0" textLength="64.6" lengthAdjust="spacingAndGlyphs">193,227</text>
<text x="1502.4" y="945.2" font-size="18.4" fill="#f0f0f0" textLength="64.6" lengthAdjust="spacingAndGlyphs">270,054</text>
<text x="1586.8" y="945.2" font-size="18.4" fill="#f0f0f0" textLength="64.6" lengthAdjust="spacingAndGlyphs">366,275</text>
<text x="1671.1" y="945.2" font-size="18.4" fill="#f0f0f0" textLength="64.6" lengthAdjust="spacingAndGlyphs">479,993</text>
<text x="1755.5" y="945.2" font-size="18.4" fill="#f0f0f0" textLength="64.6" lengthAdjust="spacingAndGlyphs">606,589</text>
<rect x="723.3" y="952.92" width="1112.0" height="29.700000000000003" fill="#444444"/>
<text x="737.2" y="974.9" font-size="17.1" fill="#ffffff" font-weight="bold" textLength="146.5" lengthAdjust="spacingAndGlyphs" stroke="#ffffff" stroke-width="0.3">Gamma Log/Log</text>
<text x="902.6" y="975.0" font-size="18.4" fill="#ffffff" textLength="44.4" lengthAdjust="spacingAndGlyphs">1,278</text>
<text x="996.4" y="975.0" font-size="18.4" fill="#ffffff" textLength="44.4" lengthAdjust="spacingAndGlyphs">2,246</text>
<text x="1080.7" y="975.0" font-size="18.4" fill="#ffffff" textLength="44.4" lengthAdjust="spacingAndGlyphs">2,240</text>
<text x="1165.1" y="975.0" font-size="18.4" fill="#ffffff" textLength="44.4" lengthAdjust="spacingAndGlyphs">2,227</text>
<text x="1249.4" y="975.0" font-size="18.4" fill="#ffffff" textLength="44.4" lengthAdjust="spacingAndGlyphs">2,228</text>
<text x="1333.8" y="975.0" font-size="18.4" fill="#ffffff" textLength="44.4" lengthAdjust="spacingAndGlyphs">2,237</text>
<text x="1418.1" y="975.0" font-size="18.4" fill="#ffffff" textLength="44.4" lengthAdjust="spacingAndGlyphs">2,231</text>
<text x="1502.4" y="975.0" font-size="18.4" fill="#ffffff" textLength="44.4" lengthAdjust="spacingAndGlyphs">2,250</text>
<text x="1586.8" y="975.0" font-size="18.4" fill="#ffffff" textLength="44.4" lengthAdjust="spacingAndGlyphs">2,225</text>
<text x="1671.1" y="975.0" font-size="18.4" fill="#ffffff" textLength="44.4" lengthAdjust="spacingAndGlyphs">2,215</text>
<text x="1755.5" y="975.0" font-size="18.4" fill="#ffffff" textLength="44.4" lengthAdjust="spacingAndGlyphs">2,275</text>
<rect x="723.3" y="982.55" width="1112.0" height="29.700000000000003" fill="#808080"/>
<text x="737.2" y="1004.8" font-size="17.1" fill="#f0f0f0" font-weight="bold" textLength="33.2" lengthAdjust="spacingAndGlyphs" stroke="#f0f0f0" stroke-width="0.3">CCT</text>
<text x="902.6" y="1004.9" font-size="18.4" fill="#f0f0f0" textLength="84.7" lengthAdjust="spacingAndGlyphs">19104,000</text>
<text x="996.4" y="1004.9" font-size="18.4" fill="#f0f0f0" textLength="74.6" lengthAdjust="spacingAndGlyphs">6810,000</text>
<text x="1080.7" y="1004.9" font-size="18.4" fill="#f0f0f0" textLength="74.6" lengthAdjust="spacingAndGlyphs">6674,000</text>
<text x="1165.1" y="1004.9" font-size="18.4" fill="#f0f0f0" textLength="74.6" lengthAdjust="spacingAndGlyphs">6679,000</text>
<text x="1249.4" y="1004.9" font-size="18.4" fill="#f0f0f0" textLength="74.6" lengthAdjust="spacingAndGlyphs">6671,000</text>
<text x="1333.8" y="1004.9" font-size="18.4" fill="#f0f0f0" textLength="74.6" lengthAdjust="spacingAndGlyphs">6665,000</text>
<text x="1418.1" y="1004.9" font-size="18.4" fill="#f0f0f0" textLength="74.6" lengthAdjust="spacingAndGlyphs">6704,000</text>
<text x="1502.4" y="1004.9" font-size="18.4" fill="#f0f0f0" textLength="74.6" lengthAdjust="spacingAndGlyphs">6675,000</text>
<text x="1586.8" y="1004.9" font-size="18.4" fill="#f0f0f0" textLength="74.6" lengthAdjust="spacingAndGlyphs">6687,000</text>
<text x="1671.1" y="1004.9" font-size="18.4" fill="#f0f0f0" textLength="74.6" lengthAdjust="spacingAndGlyphs">6702,000</text>
<text x="1755.5" y="1004.9" font-size="18.4" fill="#f0f0f0" textLength="74.6" lengthAdjust="spacingAndGlyphs">6704,000</text>
<rect x="723.3" y="1012.18" width="1112.0" height="29.700000000000003" fill="#444444"/>
<text x="737.2" y="1034.6" font-size="17.1" fill="#ffffff" font-weight="bold" textLength="71.3" lengthAdjust="spacingAndGlyphs" stroke="#ffffff" stroke-width="0.3">ΔE 2000</text>
<text x="902.6" y="1034.7" font-size="18.4" fill="#ffffff" textLength="44.4" lengthAdjust="spacingAndGlyphs">0,171</text>
<text x="996.4" y="1034.7" font-size="18.4" fill="#ffffff" textLength="44.4" lengthAdjust="spacingAndGlyphs">2,447</text>
<text x="1080.7" y="1034.7" font-size="18.4" fill="#ffffff" textLength="44.4" lengthAdjust="spacingAndGlyphs">1,854</text>
<text x="1165.1" y="1034.7" font-size="18.4" fill="#ffffff" textLength="44.4" lengthAdjust="spacingAndGlyphs">1,272</text>
<text x="1249.4" y="1034.7" font-size="18.4" fill="#ffffff" textLength="44.4" lengthAdjust="spacingAndGlyphs">1,335</text>
<text x="1333.8" y="1034.7" font-size="18.4" fill="#ffffff" textLength="44.4" lengthAdjust="spacingAndGlyphs">2,020</text>
<text x="1418.1" y="1034.7" font-size="18.4" fill="#ffffff" textLength="44.4" lengthAdjust="spacingAndGlyphs">1,638</text>
<text x="1502.4" y="1034.7" font-size="18.4" fill="#ffffff" textLength="44.4" lengthAdjust="spacingAndGlyphs">1,722</text>
<text x="1586.8" y="1034.7" font-size="18.4" fill="#ffffff" textLength="44.4" lengthAdjust="spacingAndGlyphs">1,932</text>
<text x="1671.1" y="1034.7" font-size="18.4" fill="#ffffff" textLength="44.4" lengthAdjust="spacingAndGlyphs">2,589</text>
<text x="1755.5" y="1034.7" font-size="18.4" fill="#ffffff" textLength="44.4" lengthAdjust="spacingAndGlyphs">2,683</text>
<rect x="1" y="1112.8" width="1918" height="53" fill="url(#gStrip)"/>
<rect x="2.00" y="1113" width="125.3" height="51.2" rx="3.5" fill="url(#gPB)"/>
<rect x="2.50" y="1113.5" width="124.3" height="50.2" rx="3.2" fill="none" stroke="url(#gPBk)" stroke-opacity="0.6" stroke-width="1"/>
<rect x="5.60" y="1117.2" width="117.6" height="30.2" rx="3" fill="#000000" stroke="#5a5a5a" stroke-opacity="0.7" stroke-width="1"/>
<text x="64.4" y="1159.8" font-size="9.2" fill="#2c2c2c" text-anchor="middle" font-weight="bold">0</text>
<rect x="129.27" y="1113" width="125.3" height="51.2" rx="3.5" fill="url(#gPB)"/>
<rect x="129.77" y="1113.5" width="124.3" height="50.2" rx="3.2" fill="none" stroke="url(#gPBk)" stroke-opacity="0.6" stroke-width="1"/>
<rect x="132.87" y="1117.2" width="117.6" height="30.2" rx="3" fill="#1a1a1a" stroke="#5a5a5a" stroke-opacity="0.7" stroke-width="1"/>
<text x="191.7" y="1159.8" font-size="9.2" fill="#2c2c2c" text-anchor="middle" font-weight="bold">10</text>
<rect x="256.54" y="1113" width="125.3" height="51.2" rx="3.5" fill="url(#gPB)"/>
<rect x="257.04" y="1113.5" width="124.3" height="50.2" rx="3.2" fill="none" stroke="url(#gPBk)" stroke-opacity="0.6" stroke-width="1"/>
<rect x="260.14" y="1117.2" width="117.6" height="30.2" rx="3" fill="#333333" stroke="#5a5a5a" stroke-opacity="0.7" stroke-width="1"/>
<text x="318.9" y="1159.8" font-size="9.2" fill="#2c2c2c" text-anchor="middle" font-weight="bold">20</text>
<rect x="383.81" y="1113" width="125.3" height="51.2" rx="3.5" fill="url(#gPB)"/>
<rect x="384.31" y="1113.5" width="124.3" height="50.2" rx="3.2" fill="none" stroke="url(#gPBk)" stroke-opacity="0.6" stroke-width="1"/>
<rect x="387.41" y="1117.2" width="117.6" height="30.2" rx="3" fill="#4d4d4d" stroke="#5a5a5a" stroke-opacity="0.7" stroke-width="1"/>
<text x="446.2" y="1159.8" font-size="9.2" fill="#2c2c2c" text-anchor="middle" font-weight="bold">30</text>
<rect x="511.08" y="1113" width="125.3" height="51.2" rx="3.5" fill="url(#gPB)"/>
<rect x="511.58" y="1113.5" width="124.3" height="50.2" rx="3.2" fill="none" stroke="url(#gPBk)" stroke-opacity="0.6" stroke-width="1"/>
<rect x="514.68" y="1117.2" width="117.6" height="30.2" rx="3" fill="#666666" stroke="#5a5a5a" stroke-opacity="0.7" stroke-width="1"/>
<text x="573.5" y="1159.8" font-size="9.2" fill="#2c2c2c" text-anchor="middle" font-weight="bold">40</text>
<rect x="638.35" y="1113" width="125.3" height="51.2" rx="3.5" fill="url(#gPB)"/>
<rect x="638.85" y="1113.5" width="124.3" height="50.2" rx="3.2" fill="none" stroke="url(#gPBk)" stroke-opacity="0.6" stroke-width="1"/>
<rect x="641.95" y="1117.2" width="117.6" height="30.2" rx="3" fill="#808080" stroke="#5a5a5a" stroke-opacity="0.7" stroke-width="1"/>
<text x="700.8" y="1159.8" font-size="9.2" fill="#2c2c2c" text-anchor="middle" font-weight="bold">50</text>
<rect x="765.62" y="1113" width="125.3" height="51.2" rx="3.5" fill="url(#gPB)"/>
<rect x="766.12" y="1113.5" width="124.3" height="50.2" rx="3.2" fill="none" stroke="url(#gPBk)" stroke-opacity="0.6" stroke-width="1"/>
<rect x="769.22" y="1117.2" width="117.6" height="30.2" rx="3" fill="#999999" stroke="#5a5a5a" stroke-opacity="0.7" stroke-width="1"/>
<text x="828.0" y="1159.8" font-size="9.2" fill="#2c2c2c" text-anchor="middle" font-weight="bold">60</text>
<rect x="892.89" y="1113" width="125.3" height="51.2" rx="3.5" fill="url(#gPB)"/>
<rect x="893.39" y="1113.5" width="124.3" height="50.2" rx="3.2" fill="none" stroke="url(#gPBk)" stroke-opacity="0.6" stroke-width="1"/>
<rect x="896.49" y="1117.2" width="117.6" height="30.2" rx="3" fill="#b3b3b3" stroke="#5a5a5a" stroke-opacity="0.7" stroke-width="1"/>
<text x="955.3" y="1159.8" font-size="9.2" fill="#2c2c2c" text-anchor="middle" font-weight="bold">70</text>
<rect x="1020.16" y="1113" width="125.3" height="51.2" rx="3.5" fill="url(#gPB)"/>
<rect x="1020.66" y="1113.5" width="124.3" height="50.2" rx="3.2" fill="none" stroke="url(#gPBk)" stroke-opacity="0.6" stroke-width="1"/>
<rect x="1023.76" y="1117.2" width="117.6" height="30.2" rx="3" fill="#cccccc" stroke="#5a5a5a" stroke-opacity="0.7" stroke-width="1"/>
<text x="1082.6" y="1159.8" font-size="9.2" fill="#2c2c2c" text-anchor="middle" font-weight="bold">80</text>
<rect x="1147.43" y="1113" width="125.3" height="51.2" rx="3.5" fill="url(#gPB)"/>
<rect x="1147.93" y="1113.5" width="124.3" height="50.2" rx="3.2" fill="none" stroke="url(#gPBk)" stroke-opacity="0.6" stroke-width="1"/>
<rect x="1151.03" y="1117.2" width="117.6" height="30.2" rx="3" fill="#e6e6e6" stroke="#5a5a5a" stroke-opacity="0.7" stroke-width="1"/>
<text x="1209.8" y="1159.8" font-size="9.2" fill="#2c2c2c" text-anchor="middle" font-weight="bold">90</text>
<rect x="1274.70" y="1113" width="125.3" height="51.2" rx="3.5" fill="url(#gPBs)"/>
<rect x="1278.30" y="1117.2" width="117.6" height="30.2" rx="3" fill="#ffffff" stroke="#1a1a1a" stroke-opacity="0.7" stroke-width="1"/>
<text x="1337.1" y="1159.8" font-size="9.2" fill="#ffffff" text-anchor="middle" font-weight="bold">100</text>
<path d="M1648.8 1128 V1117 Q1648.8 1113.2 1652.6 1113.2 H1685 Q1688.8 1113.2 1688.8 1117 V1128 Z" fill="url(#gC1)"/>
<circle cx="1669.2" cy="1119.8" r="6" fill="url(#gCirc)" opacity="0.8"/>
<path d="M1664.8 1121.7 H1673.8 L1669.3 1117.7 Z" fill="#2e2e2e"/>
<line x1="1648.8" y1="1128.3" x2="1688.8" y2="1128.3" stroke="#5a5a5a" stroke-width="0.9"/>
<line x1="1648.8" y1="1129.1" x2="1688.8" y2="1129.1" stroke="#8e8e8e" stroke-width="0.8"/>
<rect x="1648.8" y="1129.4" width="40" height="35" fill="url(#gC2)"/>
<rect x="1656.8" y="1134.9" width="23.4" height="23.4" rx="3" fill="#b2b2b2"/>
<path d="M1656.8 1146.8 H1680.2 V1155.3 Q1680.2 1158.3 1677.2 1158.3 H1659.8 Q1656.8 1158.3 1656.8 1155.3 Z" fill="#989898"/>
<rect x="1656.8" y="1134.9" width="23.4" height="23.4" rx="3" fill="none" stroke="#222222" stroke-width="2"/>
<rect x="1663.2" y="1141" width="11.2" height="5.8" fill="#2a2a2a"/>
<rect x="1663.2" y="1146.8" width="11.2" height="5.3" fill="#000000"/>
<rect x="1690" y="1113.1" width="189" height="25" fill="url(#gC3)"/>
<line x1="1728.3" y1="1113.2" x2="1728.3" y2="1138.2" stroke="#5c5c5c" stroke-width="1.1"/>
<line x1="1729.3" y1="1113.2" x2="1729.3" y2="1138.2" stroke="#a0a0a0" stroke-width="0.7"/>
<line x1="1766.3" y1="1113.2" x2="1766.3" y2="1138.2" stroke="#5c5c5c" stroke-width="1.1"/>
<line x1="1767.3" y1="1113.2" x2="1767.3" y2="1138.2" stroke="#a0a0a0" stroke-width="0.7"/>
<line x1="1803.3" y1="1113.2" x2="1803.3" y2="1138.2" stroke="#5c5c5c" stroke-width="1.1"/>
<line x1="1804.3" y1="1113.2" x2="1804.3" y2="1138.2" stroke="#a0a0a0" stroke-width="0.7"/>
<line x1="1841.2" y1="1113.2" x2="1841.2" y2="1138.2" stroke="#5c5c5c" stroke-width="1.1"/>
<line x1="1842.2" y1="1113.2" x2="1842.2" y2="1138.2" stroke="#a0a0a0" stroke-width="0.7"/>
<circle cx="1708.8" cy="1125.8" r="8.3" fill="url(#gCirc)" opacity="0.85"/>
<circle cx="1747.5" cy="1125.8" r="8.3" fill="url(#gCirc)" opacity="0.85"/>
<circle cx="1785" cy="1125.8" r="8.3" fill="url(#gCirc)" opacity="0.85"/>
<circle cx="1822.8" cy="1125.8" r="8.3" fill="url(#gCirc)" opacity="0.85"/>
<circle cx="1860.3" cy="1125.8" r="8.3" fill="url(#gCirc)" opacity="0.85"/>
<rect x="1705.8" y="1122.7" width="6.1" height="6.1" fill="#383838"/>
<path d="M1745.2 1122.6 L1752.2 1126.4 L1745.2 1130.2 Z" fill="#303030"/>
<g fill="none" stroke="#303030" stroke-width="1.5"><path d="M1782.8 1122.2 H1780.9 V1130.2 H1782.8"/><path d="M1787.2 1122.2 H1789.1 V1130.2 H1787.2"/></g>
<rect x="1783.3" y="1125.6" width="1.3" height="1.3" fill="#303030"/>
<rect x="1785.6" y="1125.6" width="1.3" height="1.3" fill="#303030"/>
<path d="M1822.8 1125.8 C1821 1122.8 1817.2 1122.6 1817.2 1125.8 C1817.2 1129 1821 1128.8 1822.8 1125.8 C1824.6 1122.8 1828.4 1122.6 1828.4 1125.8 C1828.4 1129 1824.6 1128.8 1822.8 1125.8 Z" fill="none" stroke="#303030" stroke-width="1.5"/>
<g fill="none" stroke="#303030" stroke-width="1.7"><path d="M1856.7 1125 A3.8 3.8 0 0 1 1863 1123"/><path d="M1863.9 1126.8 A3.8 3.8 0 0 1 1857.6 1128.8"/></g>
<path d="M1864.6 1120.6 V1124.8 H1860.4 Z M1856 1131.2 V1127 H1860.2 Z" fill="#303030"/>
<circle cx="1898.3" cy="1125.8" r="8.4" fill="url(#gDk)"/>
<rect x="1690" y="1139.3" width="227.8" height="24.6" rx="2.5" fill="url(#gBN)"/>
<line x1="1803.3" y1="1139.4" x2="1803.3" y2="1163.8" stroke="#626262" stroke-width="1.1"/>
<line x1="1804.3" y1="1139.4" x2="1804.3" y2="1163.8" stroke="#a8a8a8" stroke-width="0.7"/>
<circle cx="1715.4" cy="1151.8" r="8.2" fill="url(#gCirc)" opacity="0.85"/>
<circle cx="1893.7" cy="1151.8" r="8.2" fill="url(#gCirc)" opacity="0.85"/>
<g fill="none" stroke="#2e2e2e" stroke-width="1.1"><path d="M1715.2 1147.9 L1711.9 1151.9 L1715.2 1155.9 M1718.6 1147.9 L1715.3 1151.9 L1718.6 1155.9"/><path d="M1890.5 1147.9 L1893.8 1151.9 L1890.5 1155.9 M1893.9 1147.9 L1897.2 1151.9 L1893.9 1155.9"/></g>
<text x="1738.2" y="1158.2" font-size="18" fill="#2e2e2e" textLength="42" lengthAdjust="spacingAndGlyphs">Back</text>
<text x="1827.6" y="1158.2" font-size="18" fill="#2e2e2e" textLength="43" lengthAdjust="spacingAndGlyphs">Next</text>
<rect x="0" y="0" width="1920" height="1" fill="#8c8c8c"/>
<rect x="0" y="0" width="1.1" height="1166" fill="#828282"/>
<rect x="1918" y="26" width="1" height="1140" fill="#1c1c1c"/>
<rect x="1919" y="0" width="1" height="1166" fill="#6e6e6e"/>
<rect x="0" y="1164.9" width="1920" height="1.1" fill="#808080"/>
</svg>
</body></html>
